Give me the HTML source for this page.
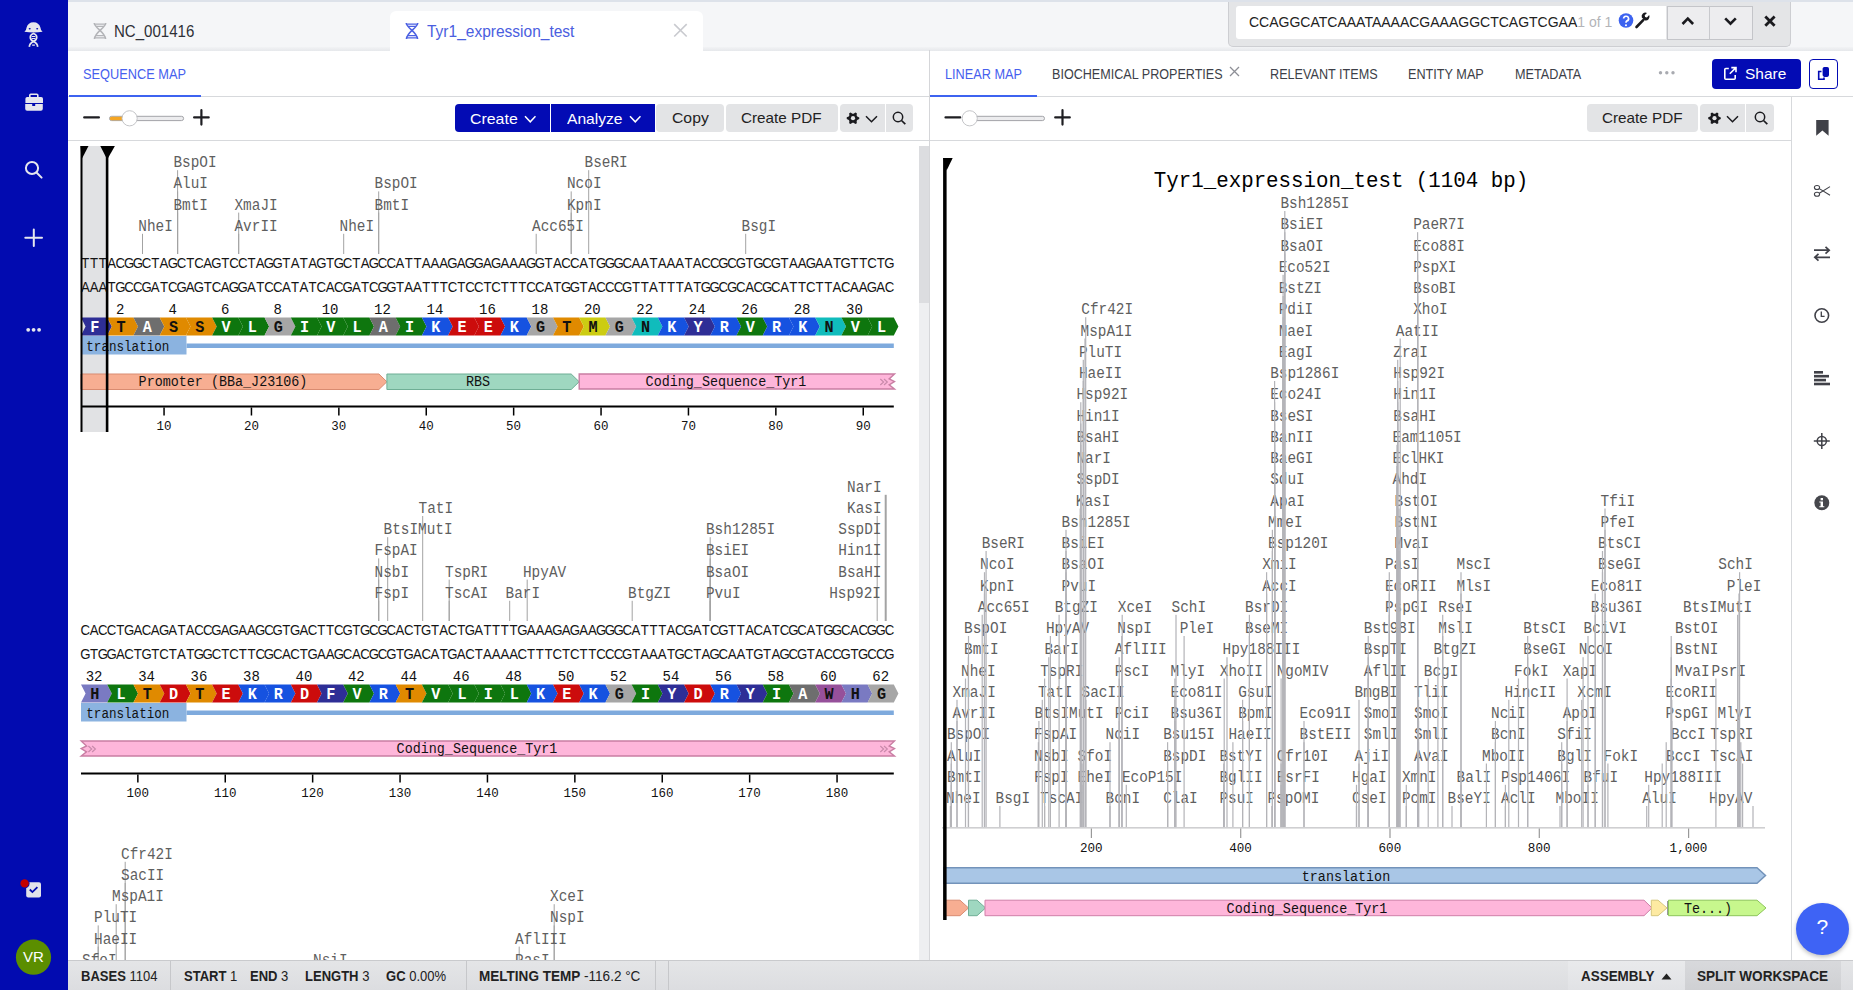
<!DOCTYPE html><html><head><meta charset="utf-8"><style>
*{margin:0;padding:0;box-sizing:border-box}
html,body{width:1853px;height:990px;overflow:hidden;background:#fff;font-family:"Liberation Sans", sans-serif}
.a{position:absolute}
.btn{position:absolute;border-radius:4px;font-size:16px;line-height:26px;text-align:center;white-space:nowrap}
.dk{background:#030bb4;color:#fff}
.lt{background:#e3e4e6;color:#222}
.tab{position:absolute;font-size:15px;color:#3d3f48;white-space:nowrap;top:65.4px}
.st{position:absolute;top:968px;font-size:14px;color:#222;white-space:nowrap}
.st b{font-weight:bold}
</style></head><body>
<svg class="a" style="left:0;top:0" width="1853" height="990"><style>
.lb{font-family:"Liberation Mono",monospace;font-size:14.4px;fill:#5f5f5f}
.sq{font-family:"Liberation Sans",sans-serif;font-size:13.2px;fill:#151515;text-anchor:middle}
.num{font-family:"Liberation Mono",monospace;font-size:14px;fill:#111;text-anchor:middle}
.aa{font-family:"Liberation Mono",monospace;font-size:15.2px;font-weight:bold;text-anchor:middle}
.ft{font-family:"Liberation Mono",monospace;font-size:13.4px;fill:#111}
.rl{font-family:"Liberation Mono",monospace;font-size:12.5px;fill:#111;text-anchor:middle}
.title{font-family:"Liberation Mono",monospace;font-size:20.8px;fill:#000}
</style><clipPath id="cl"><rect x="68" y="141" width="850" height="819"/></clipPath><g clip-path="url(#cl)"><rect x="81.5" y="146" width="25.5" height="286" fill="#e1e2e4"/><text x="138.3" y="0" transform="matrix(1,0,0,1.11,0,230.80)" class="lb">NheI</text><line x1="142.5" y1="233.8" x2="142.5" y2="254.0" stroke="#a3a3a3" stroke-width="1"/><text x="173.4" y="0" transform="matrix(1,0,0,1.11,0,167.20)" class="lb">BspOI</text><line x1="177.6" y1="170.2" x2="177.6" y2="254.0" stroke="#a3a3a3" stroke-width="1"/><text x="173.4" y="0" transform="matrix(1,0,0,1.11,0,188.40)" class="lb">AluI</text><line x1="177.6" y1="191.4" x2="177.6" y2="254.0" stroke="#a3a3a3" stroke-width="1"/><text x="173.4" y="0" transform="matrix(1,0,0,1.11,0,209.60)" class="lb">BmtI</text><line x1="177.6" y1="212.6" x2="177.6" y2="254.0" stroke="#a3a3a3" stroke-width="1"/><text x="234.5" y="0" transform="matrix(1,0,0,1.11,0,209.60)" class="lb">XmaJI</text><line x1="238.7" y1="212.6" x2="238.7" y2="254.0" stroke="#a3a3a3" stroke-width="1"/><text x="234.5" y="0" transform="matrix(1,0,0,1.11,0,230.80)" class="lb">AvrII</text><line x1="238.7" y1="233.8" x2="238.7" y2="254.0" stroke="#a3a3a3" stroke-width="1"/><text x="374.5" y="0" transform="matrix(1,0,0,1.11,0,188.40)" class="lb">BspOI</text><line x1="378.7" y1="191.4" x2="378.7" y2="254.0" stroke="#a3a3a3" stroke-width="1"/><text x="374.5" y="0" transform="matrix(1,0,0,1.11,0,209.60)" class="lb">BmtI</text><line x1="378.7" y1="212.6" x2="378.7" y2="254.0" stroke="#a3a3a3" stroke-width="1"/><text x="339.5" y="0" transform="matrix(1,0,0,1.11,0,230.80)" class="lb">NheI</text><line x1="343.7" y1="233.8" x2="343.7" y2="254.0" stroke="#a3a3a3" stroke-width="1"/><text x="584.5" y="0" transform="matrix(1,0,0,1.11,0,167.20)" class="lb">BseRI</text><line x1="588.7" y1="170.2" x2="588.7" y2="254.0" stroke="#a3a3a3" stroke-width="1"/><text x="567" y="0" transform="matrix(1,0,0,1.11,0,188.40)" class="lb">NcoI</text><line x1="571.2" y1="191.4" x2="571.2" y2="254.0" stroke="#a3a3a3" stroke-width="1"/><text x="567" y="0" transform="matrix(1,0,0,1.11,0,209.60)" class="lb">KpnI</text><line x1="571.2" y1="212.6" x2="571.2" y2="254.0" stroke="#a3a3a3" stroke-width="1"/><text x="532" y="0" transform="matrix(1,0,0,1.11,0,230.80)" class="lb">Acc65I</text><line x1="536.2" y1="233.8" x2="536.2" y2="254.0" stroke="#a3a3a3" stroke-width="1"/><text x="741.5" y="0" transform="matrix(1,0,0,1.11,0,230.80)" class="lb">BsgI</text><line x1="745.7" y1="233.8" x2="745.7" y2="254.0" stroke="#a3a3a3" stroke-width="1"/><text x="85.37 94.11 102.85 111.59 120.33 129.07 137.81 146.55 155.29 164.03 172.77 181.51 190.25 198.99 207.73 216.47 225.21 233.95 242.69 251.43 260.17 268.91 277.65 286.39 295.13 303.87 312.61 321.35 330.09 338.83 347.57 356.31 365.05 373.79 382.53 391.27 400.01 408.75 417.49 426.23 434.97 443.71 452.45 461.19 469.93 478.67 487.41 496.15 504.89 513.63 522.37 531.11 539.85 548.59 557.33 566.07 574.81 583.55 592.29 601.03 609.77 618.51 627.25 635.99 644.73 653.47 662.21 670.95 679.69 688.43 697.17 705.91 714.65 723.39 732.13 740.87 749.61 758.35 767.09 775.83 784.57 793.31 802.05 810.79 819.53 828.27 837.01 845.75 854.49 863.23 871.97 880.71 889.45" y="0" transform="matrix(1,0,0,1.04,0,268.00)" class="sq">TTTACGGCTAGCTCAGTCCTAGGTATAGTGCTAGCCATTAAAGAGGAGAAAGGTACCATGGGCAATAAATACCGCGTGCGTAAGAATGTTCTG</text><text x="85.37 94.11 102.85 111.59 120.33 129.07 137.81 146.55 155.29 164.03 172.77 181.51 190.25 198.99 207.73 216.47 225.21 233.95 242.69 251.43 260.17 268.91 277.65 286.39 295.13 303.87 312.61 321.35 330.09 338.83 347.57 356.31 365.05 373.79 382.53 391.27 400.01 408.75 417.49 426.23 434.97 443.71 452.45 461.19 469.93 478.67 487.41 496.15 504.89 513.63 522.37 531.11 539.85 548.59 557.33 566.07 574.81 583.55 592.29 601.03 609.77 618.51 627.25 635.99 644.73 653.47 662.21 670.95 679.69 688.43 697.17 705.91 714.65 723.39 732.13 740.87 749.61 758.35 767.09 775.83 784.57 793.31 802.05 810.79 819.53 828.27 837.01 845.75 854.49 863.23 871.97 880.71 889.45" y="0" transform="matrix(1,0,0,1.04,0,291.50)" class="sq">AAATGCCGATCGAGTCAGGATCCATATCACGATCGGTAATTTCTCCTCTTTCCATGGTACCCGTTATTTATGGCGCACGCATTCTTACAAGAC</text><text x="120.3" y="0" transform="matrix(1,0,0,1.07,0,314.00)" class="num">2</text><text x="172.8" y="0" transform="matrix(1,0,0,1.07,0,314.00)" class="num">4</text><text x="225.2" y="0" transform="matrix(1,0,0,1.07,0,314.00)" class="num">6</text><text x="277.6" y="0" transform="matrix(1,0,0,1.07,0,314.00)" class="num">8</text><text x="330.1" y="0" transform="matrix(1,0,0,1.07,0,314.00)" class="num">10</text><text x="382.5" y="0" transform="matrix(1,0,0,1.07,0,314.00)" class="num">12</text><text x="435.0" y="0" transform="matrix(1,0,0,1.07,0,314.00)" class="num">14</text><text x="487.4" y="0" transform="matrix(1,0,0,1.07,0,314.00)" class="num">16</text><text x="539.9" y="0" transform="matrix(1,0,0,1.07,0,314.00)" class="num">18</text><text x="592.3" y="0" transform="matrix(1,0,0,1.07,0,314.00)" class="num">20</text><text x="644.7" y="0" transform="matrix(1,0,0,1.07,0,314.00)" class="num">22</text><text x="697.2" y="0" transform="matrix(1,0,0,1.07,0,314.00)" class="num">24</text><text x="749.6" y="0" transform="matrix(1,0,0,1.07,0,314.00)" class="num">26</text><text x="802.1" y="0" transform="matrix(1,0,0,1.07,0,314.00)" class="num">28</text><text x="854.5" y="0" transform="matrix(1,0,0,1.07,0,314.00)" class="num">30</text><polygon points="81.0,317.5 107.2,317.5 111.8,326.5 107.2,335.5 81.0,335.5 85.6,326.5" fill="#2e2e96"/><text x="94.9" y="0" transform="matrix(1,0,0,1.12,0,331.70)" class="aa" fill="#fff">F</text><polygon points="107.2,317.5 133.4,317.5 138.0,326.5 133.4,335.5 107.2,335.5 111.8,326.5" fill="#e08a00"/><text x="121.1" y="0" transform="matrix(1,0,0,1.12,0,331.70)" class="aa" fill="#111">T</text><polygon points="133.4,317.5 159.7,317.5 164.3,326.5 159.7,335.5 133.4,335.5 138.0,326.5" fill="#6e6e6e"/><text x="147.4" y="0" transform="matrix(1,0,0,1.12,0,331.70)" class="aa" fill="#fff">A</text><polygon points="159.7,317.5 185.9,317.5 190.5,326.5 185.9,335.5 159.7,335.5 164.3,326.5" fill="#e08a00"/><text x="173.6" y="0" transform="matrix(1,0,0,1.12,0,331.70)" class="aa" fill="#111">S</text><polygon points="185.9,317.5 212.1,317.5 216.7,326.5 212.1,335.5 185.9,335.5 190.5,326.5" fill="#e08a00"/><text x="199.8" y="0" transform="matrix(1,0,0,1.12,0,331.70)" class="aa" fill="#111">S</text><polygon points="212.1,317.5 238.3,317.5 242.9,326.5 238.3,335.5 212.1,335.5 216.7,326.5" fill="#0e760e"/><text x="226.0" y="0" transform="matrix(1,0,0,1.12,0,331.70)" class="aa" fill="#fff">V</text><polygon points="238.3,317.5 264.5,317.5 269.1,326.5 264.5,335.5 238.3,335.5 242.9,326.5" fill="#0e760e"/><text x="252.2" y="0" transform="matrix(1,0,0,1.12,0,331.70)" class="aa" fill="#fff">L</text><polygon points="264.5,317.5 290.8,317.5 295.4,326.5 290.8,335.5 264.5,335.5 269.1,326.5" fill="#a6a6a6"/><text x="278.4" y="0" transform="matrix(1,0,0,1.12,0,331.70)" class="aa" fill="#111">G</text><polygon points="290.8,317.5 317.0,317.5 321.6,326.5 317.0,335.5 290.8,335.5 295.4,326.5" fill="#0e760e"/><text x="304.7" y="0" transform="matrix(1,0,0,1.12,0,331.70)" class="aa" fill="#fff">I</text><polygon points="317.0,317.5 343.2,317.5 347.8,326.5 343.2,335.5 317.0,335.5 321.6,326.5" fill="#0e760e"/><text x="330.9" y="0" transform="matrix(1,0,0,1.12,0,331.70)" class="aa" fill="#fff">V</text><polygon points="343.2,317.5 369.4,317.5 374.0,326.5 369.4,335.5 343.2,335.5 347.8,326.5" fill="#0e760e"/><text x="357.1" y="0" transform="matrix(1,0,0,1.12,0,331.70)" class="aa" fill="#fff">L</text><polygon points="369.4,317.5 395.6,317.5 400.2,326.5 395.6,335.5 369.4,335.5 374.0,326.5" fill="#6e6e6e"/><text x="383.3" y="0" transform="matrix(1,0,0,1.12,0,331.70)" class="aa" fill="#fff">A</text><polygon points="395.6,317.5 421.9,317.5 426.5,326.5 421.9,335.5 395.6,335.5 400.2,326.5" fill="#0e760e"/><text x="409.6" y="0" transform="matrix(1,0,0,1.12,0,331.70)" class="aa" fill="#fff">I</text><polygon points="421.9,317.5 448.1,317.5 452.7,326.5 448.1,335.5 421.9,335.5 426.5,326.5" fill="#1652e0"/><text x="435.8" y="0" transform="matrix(1,0,0,1.12,0,331.70)" class="aa" fill="#fff">K</text><polygon points="448.1,317.5 474.3,317.5 478.9,326.5 474.3,335.5 448.1,335.5 452.7,326.5" fill="#cc0c0c"/><text x="462.0" y="0" transform="matrix(1,0,0,1.12,0,331.70)" class="aa" fill="#fff">E</text><polygon points="474.3,317.5 500.5,317.5 505.1,326.5 500.5,335.5 474.3,335.5 478.9,326.5" fill="#cc0c0c"/><text x="488.2" y="0" transform="matrix(1,0,0,1.12,0,331.70)" class="aa" fill="#fff">E</text><polygon points="500.5,317.5 526.7,317.5 531.3,326.5 526.7,335.5 500.5,335.5 505.1,326.5" fill="#1652e0"/><text x="514.4" y="0" transform="matrix(1,0,0,1.12,0,331.70)" class="aa" fill="#fff">K</text><polygon points="526.7,317.5 553.0,317.5 557.6,326.5 553.0,335.5 526.7,335.5 531.3,326.5" fill="#a6a6a6"/><text x="540.6" y="0" transform="matrix(1,0,0,1.12,0,331.70)" class="aa" fill="#111">G</text><polygon points="553.0,317.5 579.2,317.5 583.8,326.5 579.2,335.5 553.0,335.5 557.6,326.5" fill="#e08a00"/><text x="566.9" y="0" transform="matrix(1,0,0,1.12,0,331.70)" class="aa" fill="#111">T</text><polygon points="579.2,317.5 605.4,317.5 610.0,326.5 605.4,335.5 579.2,335.5 583.8,326.5" fill="#cccc12"/><text x="593.1" y="0" transform="matrix(1,0,0,1.12,0,331.70)" class="aa" fill="#111">M</text><polygon points="605.4,317.5 631.6,317.5 636.2,326.5 631.6,335.5 605.4,335.5 610.0,326.5" fill="#a6a6a6"/><text x="619.3" y="0" transform="matrix(1,0,0,1.12,0,331.70)" class="aa" fill="#111">G</text><polygon points="631.6,317.5 657.8,317.5 662.4,326.5 657.8,335.5 631.6,335.5 636.2,326.5" fill="#10bcbc"/><text x="645.5" y="0" transform="matrix(1,0,0,1.12,0,331.70)" class="aa" fill="#111">N</text><polygon points="657.8,317.5 684.1,317.5 688.7,326.5 684.1,335.5 657.8,335.5 662.4,326.5" fill="#1652e0"/><text x="671.8" y="0" transform="matrix(1,0,0,1.12,0,331.70)" class="aa" fill="#fff">K</text><polygon points="684.1,317.5 710.3,317.5 714.9,326.5 710.3,335.5 684.1,335.5 688.7,326.5" fill="#2e2e96"/><text x="698.0" y="0" transform="matrix(1,0,0,1.12,0,331.70)" class="aa" fill="#fff">Y</text><polygon points="710.3,317.5 736.5,317.5 741.1,326.5 736.5,335.5 710.3,335.5 714.9,326.5" fill="#1652e0"/><text x="724.2" y="0" transform="matrix(1,0,0,1.12,0,331.70)" class="aa" fill="#fff">R</text><polygon points="736.5,317.5 762.7,317.5 767.3,326.5 762.7,335.5 736.5,335.5 741.1,326.5" fill="#0e760e"/><text x="750.4" y="0" transform="matrix(1,0,0,1.12,0,331.70)" class="aa" fill="#fff">V</text><polygon points="762.7,317.5 788.9,317.5 793.5,326.5 788.9,335.5 762.7,335.5 767.3,326.5" fill="#1652e0"/><text x="776.6" y="0" transform="matrix(1,0,0,1.12,0,331.70)" class="aa" fill="#fff">R</text><polygon points="788.9,317.5 815.2,317.5 819.8,326.5 815.2,335.5 788.9,335.5 793.5,326.5" fill="#1652e0"/><text x="802.9" y="0" transform="matrix(1,0,0,1.12,0,331.70)" class="aa" fill="#fff">K</text><polygon points="815.2,317.5 841.4,317.5 846.0,326.5 841.4,335.5 815.2,335.5 819.8,326.5" fill="#10bcbc"/><text x="829.1" y="0" transform="matrix(1,0,0,1.12,0,331.70)" class="aa" fill="#111">N</text><polygon points="841.4,317.5 867.6,317.5 872.2,326.5 867.6,335.5 841.4,335.5 846.0,326.5" fill="#0e760e"/><text x="855.3" y="0" transform="matrix(1,0,0,1.12,0,331.70)" class="aa" fill="#fff">V</text><polygon points="867.6,317.5 893.8,317.5 898.4,326.5 893.8,335.5 867.6,335.5 872.2,326.5" fill="#0e760e"/><text x="881.5" y="0" transform="matrix(1,0,0,1.12,0,331.70)" class="aa" fill="#fff">L</text><rect x="186.5" y="343.5" width="707.3" height="4.5" fill="#7eaadd"/><rect x="81.0" y="336.0" width="105.5" height="18.5" fill="#8bb3e0"/><text x="86.3" y="0" transform="matrix(1,0,0,1.1,0,351.00)" class="ft" style="font-size:12.6px">translation</text><polygon points="81.0,374.0 378.90000000000003,374.0 386.90000000000003,381.75 378.90000000000003,389.5 81.0,389.5" fill="#f7ae92" stroke="#d98b70" stroke-width="1"/><text x="223.0" y="0" transform="matrix(1,0,0,1.1,0,386.00)" class="ft" text-anchor="middle">Promoter (BBa_J23106)</text><polygon points="386.90000000000003,374.0 571.1800000000001,374.0 579.1800000000001,381.75 571.1800000000001,389.5 386.90000000000003,389.5" fill="#9fd7c0" stroke="#6fae95" stroke-width="1"/><text x="478.0" y="0" transform="matrix(1,0,0,1.1,0,386.00)" class="ft" text-anchor="middle">RBS</text><polygon points="579.2,374.0 894.5,374.0 889.2,378.9 894.5,381.5 889.2,384.8 894.5,389.0 579.2,389.0" fill="#feb6da" stroke="#c97ea3" stroke-width="1.4"/><path d="M880.3,379.0 l3.3,3 l-3.3,3 M884.0,379.0 l3.3,3 l-3.3,3" stroke="#c98aab" stroke-width="1.2" fill="none"/><text x="726.0" y="0" transform="matrix(1,0,0,1.1,0,385.80)" class="ft" text-anchor="middle">Coding_Sequence_Tyr1</text><rect x="81.0" y="405.5" width="812.8" height="2" fill="#000"/><rect x="163.3" y="407.5" width="1.5" height="8" fill="#000"/><text x="164.0" y="0" transform="matrix(1,0,0,1.08,0,429.50)" class="rl">10</text><rect x="250.7" y="407.5" width="1.5" height="8" fill="#000"/><text x="251.4" y="0" transform="matrix(1,0,0,1.08,0,429.50)" class="rl">20</text><rect x="338.1" y="407.5" width="1.5" height="8" fill="#000"/><text x="338.8" y="0" transform="matrix(1,0,0,1.08,0,429.50)" class="rl">30</text><rect x="425.5" y="407.5" width="1.5" height="8" fill="#000"/><text x="426.2" y="0" transform="matrix(1,0,0,1.08,0,429.50)" class="rl">40</text><rect x="512.9" y="407.5" width="1.5" height="8" fill="#000"/><text x="513.6" y="0" transform="matrix(1,0,0,1.08,0,429.50)" class="rl">50</text><rect x="600.3" y="407.5" width="1.5" height="8" fill="#000"/><text x="601.0" y="0" transform="matrix(1,0,0,1.08,0,429.50)" class="rl">60</text><rect x="687.7" y="407.5" width="1.5" height="8" fill="#000"/><text x="688.4" y="0" transform="matrix(1,0,0,1.08,0,429.50)" class="rl">70</text><rect x="775.1" y="407.5" width="1.5" height="8" fill="#000"/><text x="775.8" y="0" transform="matrix(1,0,0,1.08,0,429.50)" class="rl">80</text><rect x="862.5" y="407.5" width="1.5" height="8" fill="#000"/><text x="863.2" y="0" transform="matrix(1,0,0,1.08,0,429.50)" class="rl">90</text><rect x="80.5" y="146" width="2" height="286" fill="#000"/><rect x="105.8" y="146" width="2.6" height="286" fill="#000"/><polygon points="80.5,146 88.5,146 81.5,159.5" fill="#000"/><polygon points="100.3,146 114.9,146 107.2,159.6" fill="#000"/><text x="418.5" y="0" transform="matrix(1,0,0,1.11,0,513.00)" class="lb">TatI</text><line x1="422.7" y1="516.0" x2="422.7" y2="621.0" stroke="#a3a3a3" stroke-width="1"/><text x="383.5" y="0" transform="matrix(1,0,0,1.11,0,534.20)" class="lb">BtsIMutI</text><line x1="387.7" y1="537.2" x2="387.7" y2="621.0" stroke="#a3a3a3" stroke-width="1"/><text x="374.5" y="0" transform="matrix(1,0,0,1.11,0,555.40)" class="lb">FspAI</text><line x1="378.7" y1="558.4" x2="378.7" y2="621.0" stroke="#a3a3a3" stroke-width="1"/><text x="374.5" y="0" transform="matrix(1,0,0,1.11,0,576.60)" class="lb">NsbI</text><line x1="378.7" y1="579.6" x2="378.7" y2="621.0" stroke="#a3a3a3" stroke-width="1"/><text x="374.5" y="0" transform="matrix(1,0,0,1.11,0,597.80)" class="lb">FspI</text><line x1="378.7" y1="600.8" x2="378.7" y2="621.0" stroke="#a3a3a3" stroke-width="1"/><text x="445" y="0" transform="matrix(1,0,0,1.11,0,576.60)" class="lb">TspRI</text><line x1="449.2" y1="579.6" x2="449.2" y2="621.0" stroke="#a3a3a3" stroke-width="1"/><text x="445" y="0" transform="matrix(1,0,0,1.11,0,597.80)" class="lb">TscAI</text><line x1="449.2" y1="600.8" x2="449.2" y2="621.0" stroke="#a3a3a3" stroke-width="1"/><text x="523" y="0" transform="matrix(1,0,0,1.11,0,576.60)" class="lb">HpyAV</text><line x1="527.2" y1="579.6" x2="527.2" y2="621.0" stroke="#a3a3a3" stroke-width="1"/><text x="505.5" y="0" transform="matrix(1,0,0,1.11,0,597.80)" class="lb">BarI</text><line x1="509.7" y1="600.8" x2="509.7" y2="621.0" stroke="#a3a3a3" stroke-width="1"/><text x="628" y="0" transform="matrix(1,0,0,1.11,0,597.80)" class="lb">BtgZI</text><line x1="632.2" y1="600.8" x2="632.2" y2="621.0" stroke="#a3a3a3" stroke-width="1"/><text x="706" y="0" transform="matrix(1,0,0,1.11,0,534.20)" class="lb">Bsh1285I</text><line x1="710.2" y1="537.2" x2="710.2" y2="621.0" stroke="#a3a3a3" stroke-width="1"/><text x="706" y="0" transform="matrix(1,0,0,1.11,0,555.40)" class="lb">BsiEI</text><line x1="710.2" y1="558.4" x2="710.2" y2="621.0" stroke="#a3a3a3" stroke-width="1"/><text x="706" y="0" transform="matrix(1,0,0,1.11,0,576.60)" class="lb">BsaOI</text><line x1="710.2" y1="579.6" x2="710.2" y2="621.0" stroke="#a3a3a3" stroke-width="1"/><text x="706" y="0" transform="matrix(1,0,0,1.11,0,597.80)" class="lb">PvuI</text><line x1="710.2" y1="600.8" x2="710.2" y2="621.0" stroke="#a3a3a3" stroke-width="1"/><text x="847" y="0" transform="matrix(1,0,0,1.11,0,491.80)" class="lb">NarI</text><line x1="885.7" y1="494.8" x2="885.7" y2="621.0" stroke="#a3a3a3" stroke-width="2"/><text x="847" y="0" transform="matrix(1,0,0,1.11,0,513.00)" class="lb">KasI</text><line x1="877.2" y1="516.0" x2="877.2" y2="621.0" stroke="#a3a3a3" stroke-width="1"/><text x="838.3" y="0" transform="matrix(1,0,0,1.11,0,534.20)" class="lb">SspDI</text><text x="838.3" y="0" transform="matrix(1,0,0,1.11,0,555.40)" class="lb">Hin1I</text><text x="838.3" y="0" transform="matrix(1,0,0,1.11,0,576.60)" class="lb">BsaHI</text><text x="829.2" y="0" transform="matrix(1,0,0,1.11,0,597.80)" class="lb">Hsp92I</text><text x="85.37 94.11 102.85 111.59 120.33 129.07 137.81 146.55 155.29 164.03 172.77 181.51 190.25 198.99 207.73 216.47 225.21 233.95 242.69 251.43 260.17 268.91 277.65 286.39 295.13 303.87 312.61 321.35 330.09 338.83 347.57 356.31 365.05 373.79 382.53 391.27 400.01 408.75 417.49 426.23 434.97 443.71 452.45 461.19 469.93 478.67 487.41 496.15 504.89 513.63 522.37 531.11 539.85 548.59 557.33 566.07 574.81 583.55 592.29 601.03 609.77 618.51 627.25 635.99 644.73 653.47 662.21 670.95 679.69 688.43 697.17 705.91 714.65 723.39 732.13 740.87 749.61 758.35 767.09 775.83 784.57 793.31 802.05 810.79 819.53 828.27 837.01 845.75 854.49 863.23 871.97 880.71 889.45" y="0" transform="matrix(1,0,0,1.04,0,635.00)" class="sq">CACCTGACAGATACCGAGAAGCGTGACTTCGTGCGCACTGTACTGATTTTGAAAGAGAAGGGCATTTACGATCGTTACATCGCATGGCACGGC</text><text x="85.37 94.11 102.85 111.59 120.33 129.07 137.81 146.55 155.29 164.03 172.77 181.51 190.25 198.99 207.73 216.47 225.21 233.95 242.69 251.43 260.17 268.91 277.65 286.39 295.13 303.87 312.61 321.35 330.09 338.83 347.57 356.31 365.05 373.79 382.53 391.27 400.01 408.75 417.49 426.23 434.97 443.71 452.45 461.19 469.93 478.67 487.41 496.15 504.89 513.63 522.37 531.11 539.85 548.59 557.33 566.07 574.81 583.55 592.29 601.03 609.77 618.51 627.25 635.99 644.73 653.47 662.21 670.95 679.69 688.43 697.17 705.91 714.65 723.39 732.13 740.87 749.61 758.35 767.09 775.83 784.57 793.31 802.05 810.79 819.53 828.27 837.01 845.75 854.49 863.23 871.97 880.71 889.45" y="0" transform="matrix(1,0,0,1.04,0,658.50)" class="sq">GTGGACTGTCTATGGCTCTTCGCACTGAAGCACGCGTGACATGACTAAAACTTTCTCTTCCCGTAAATGCTAGCAATGTAGCGTACCGTGCCG</text><text x="94.1" y="0" transform="matrix(1,0,0,1.07,0,681.00)" class="num">32</text><text x="146.6" y="0" transform="matrix(1,0,0,1.07,0,681.00)" class="num">34</text><text x="199.0" y="0" transform="matrix(1,0,0,1.07,0,681.00)" class="num">36</text><text x="251.4" y="0" transform="matrix(1,0,0,1.07,0,681.00)" class="num">38</text><text x="303.9" y="0" transform="matrix(1,0,0,1.07,0,681.00)" class="num">40</text><text x="356.3" y="0" transform="matrix(1,0,0,1.07,0,681.00)" class="num">42</text><text x="408.8" y="0" transform="matrix(1,0,0,1.07,0,681.00)" class="num">44</text><text x="461.2" y="0" transform="matrix(1,0,0,1.07,0,681.00)" class="num">46</text><text x="513.6" y="0" transform="matrix(1,0,0,1.07,0,681.00)" class="num">48</text><text x="566.1" y="0" transform="matrix(1,0,0,1.07,0,681.00)" class="num">50</text><text x="618.5" y="0" transform="matrix(1,0,0,1.07,0,681.00)" class="num">52</text><text x="671.0" y="0" transform="matrix(1,0,0,1.07,0,681.00)" class="num">54</text><text x="723.4" y="0" transform="matrix(1,0,0,1.07,0,681.00)" class="num">56</text><text x="775.8" y="0" transform="matrix(1,0,0,1.07,0,681.00)" class="num">58</text><text x="828.3" y="0" transform="matrix(1,0,0,1.07,0,681.00)" class="num">60</text><text x="880.7" y="0" transform="matrix(1,0,0,1.07,0,681.00)" class="num">62</text><polygon points="81.0,684.5 107.2,684.5 111.8,693.5 107.2,702.5 81.0,702.5 85.6,693.5" fill="#7a7ac2"/><text x="94.9" y="0" transform="matrix(1,0,0,1.12,0,698.70)" class="aa" fill="#111">H</text><polygon points="107.2,684.5 133.4,684.5 138.0,693.5 133.4,702.5 107.2,702.5 111.8,693.5" fill="#0e760e"/><text x="121.1" y="0" transform="matrix(1,0,0,1.12,0,698.70)" class="aa" fill="#fff">L</text><polygon points="133.4,684.5 159.7,684.5 164.3,693.5 159.7,702.5 133.4,702.5 138.0,693.5" fill="#e08a00"/><text x="147.4" y="0" transform="matrix(1,0,0,1.12,0,698.70)" class="aa" fill="#111">T</text><polygon points="159.7,684.5 185.9,684.5 190.5,693.5 185.9,702.5 159.7,702.5 164.3,693.5" fill="#cc0c0c"/><text x="173.6" y="0" transform="matrix(1,0,0,1.12,0,698.70)" class="aa" fill="#fff">D</text><polygon points="185.9,684.5 212.1,684.5 216.7,693.5 212.1,702.5 185.9,702.5 190.5,693.5" fill="#e08a00"/><text x="199.8" y="0" transform="matrix(1,0,0,1.12,0,698.70)" class="aa" fill="#111">T</text><polygon points="212.1,684.5 238.3,684.5 242.9,693.5 238.3,702.5 212.1,702.5 216.7,693.5" fill="#cc0c0c"/><text x="226.0" y="0" transform="matrix(1,0,0,1.12,0,698.70)" class="aa" fill="#fff">E</text><polygon points="238.3,684.5 264.5,684.5 269.1,693.5 264.5,702.5 238.3,702.5 242.9,693.5" fill="#1652e0"/><text x="252.2" y="0" transform="matrix(1,0,0,1.12,0,698.70)" class="aa" fill="#fff">K</text><polygon points="264.5,684.5 290.8,684.5 295.4,693.5 290.8,702.5 264.5,702.5 269.1,693.5" fill="#1652e0"/><text x="278.4" y="0" transform="matrix(1,0,0,1.12,0,698.70)" class="aa" fill="#fff">R</text><polygon points="290.8,684.5 317.0,684.5 321.6,693.5 317.0,702.5 290.8,702.5 295.4,693.5" fill="#cc0c0c"/><text x="304.7" y="0" transform="matrix(1,0,0,1.12,0,698.70)" class="aa" fill="#fff">D</text><polygon points="317.0,684.5 343.2,684.5 347.8,693.5 343.2,702.5 317.0,702.5 321.6,693.5" fill="#2e2e96"/><text x="330.9" y="0" transform="matrix(1,0,0,1.12,0,698.70)" class="aa" fill="#fff">F</text><polygon points="343.2,684.5 369.4,684.5 374.0,693.5 369.4,702.5 343.2,702.5 347.8,693.5" fill="#0e760e"/><text x="357.1" y="0" transform="matrix(1,0,0,1.12,0,698.70)" class="aa" fill="#fff">V</text><polygon points="369.4,684.5 395.6,684.5 400.2,693.5 395.6,702.5 369.4,702.5 374.0,693.5" fill="#1652e0"/><text x="383.3" y="0" transform="matrix(1,0,0,1.12,0,698.70)" class="aa" fill="#fff">R</text><polygon points="395.6,684.5 421.9,684.5 426.5,693.5 421.9,702.5 395.6,702.5 400.2,693.5" fill="#e08a00"/><text x="409.6" y="0" transform="matrix(1,0,0,1.12,0,698.70)" class="aa" fill="#111">T</text><polygon points="421.9,684.5 448.1,684.5 452.7,693.5 448.1,702.5 421.9,702.5 426.5,693.5" fill="#0e760e"/><text x="435.8" y="0" transform="matrix(1,0,0,1.12,0,698.70)" class="aa" fill="#fff">V</text><polygon points="448.1,684.5 474.3,684.5 478.9,693.5 474.3,702.5 448.1,702.5 452.7,693.5" fill="#0e760e"/><text x="462.0" y="0" transform="matrix(1,0,0,1.12,0,698.70)" class="aa" fill="#fff">L</text><polygon points="474.3,684.5 500.5,684.5 505.1,693.5 500.5,702.5 474.3,702.5 478.9,693.5" fill="#0e760e"/><text x="488.2" y="0" transform="matrix(1,0,0,1.12,0,698.70)" class="aa" fill="#fff">I</text><polygon points="500.5,684.5 526.7,684.5 531.3,693.5 526.7,702.5 500.5,702.5 505.1,693.5" fill="#0e760e"/><text x="514.4" y="0" transform="matrix(1,0,0,1.12,0,698.70)" class="aa" fill="#fff">L</text><polygon points="526.7,684.5 553.0,684.5 557.6,693.5 553.0,702.5 526.7,702.5 531.3,693.5" fill="#1652e0"/><text x="540.6" y="0" transform="matrix(1,0,0,1.12,0,698.70)" class="aa" fill="#fff">K</text><polygon points="553.0,684.5 579.2,684.5 583.8,693.5 579.2,702.5 553.0,702.5 557.6,693.5" fill="#cc0c0c"/><text x="566.9" y="0" transform="matrix(1,0,0,1.12,0,698.70)" class="aa" fill="#fff">E</text><polygon points="579.2,684.5 605.4,684.5 610.0,693.5 605.4,702.5 579.2,702.5 583.8,693.5" fill="#1652e0"/><text x="593.1" y="0" transform="matrix(1,0,0,1.12,0,698.70)" class="aa" fill="#fff">K</text><polygon points="605.4,684.5 631.6,684.5 636.2,693.5 631.6,702.5 605.4,702.5 610.0,693.5" fill="#a6a6a6"/><text x="619.3" y="0" transform="matrix(1,0,0,1.12,0,698.70)" class="aa" fill="#111">G</text><polygon points="631.6,684.5 657.8,684.5 662.4,693.5 657.8,702.5 631.6,702.5 636.2,693.5" fill="#0e760e"/><text x="645.5" y="0" transform="matrix(1,0,0,1.12,0,698.70)" class="aa" fill="#fff">I</text><polygon points="657.8,684.5 684.1,684.5 688.7,693.5 684.1,702.5 657.8,702.5 662.4,693.5" fill="#2e2e96"/><text x="671.8" y="0" transform="matrix(1,0,0,1.12,0,698.70)" class="aa" fill="#fff">Y</text><polygon points="684.1,684.5 710.3,684.5 714.9,693.5 710.3,702.5 684.1,702.5 688.7,693.5" fill="#cc0c0c"/><text x="698.0" y="0" transform="matrix(1,0,0,1.12,0,698.70)" class="aa" fill="#fff">D</text><polygon points="710.3,684.5 736.5,684.5 741.1,693.5 736.5,702.5 710.3,702.5 714.9,693.5" fill="#1652e0"/><text x="724.2" y="0" transform="matrix(1,0,0,1.12,0,698.70)" class="aa" fill="#fff">R</text><polygon points="736.5,684.5 762.7,684.5 767.3,693.5 762.7,702.5 736.5,702.5 741.1,693.5" fill="#2e2e96"/><text x="750.4" y="0" transform="matrix(1,0,0,1.12,0,698.70)" class="aa" fill="#fff">Y</text><polygon points="762.7,684.5 788.9,684.5 793.5,693.5 788.9,702.5 762.7,702.5 767.3,693.5" fill="#0e760e"/><text x="776.6" y="0" transform="matrix(1,0,0,1.12,0,698.70)" class="aa" fill="#fff">I</text><polygon points="788.9,684.5 815.2,684.5 819.8,693.5 815.2,702.5 788.9,702.5 793.5,693.5" fill="#6e6e6e"/><text x="802.9" y="0" transform="matrix(1,0,0,1.12,0,698.70)" class="aa" fill="#fff">A</text><polygon points="815.2,684.5 841.4,684.5 846.0,693.5 841.4,702.5 815.2,702.5 819.8,693.5" fill="#96509a"/><text x="829.1" y="0" transform="matrix(1,0,0,1.12,0,698.70)" class="aa" fill="#111">W</text><polygon points="841.4,684.5 867.6,684.5 872.2,693.5 867.6,702.5 841.4,702.5 846.0,693.5" fill="#7a7ac2"/><text x="855.3" y="0" transform="matrix(1,0,0,1.12,0,698.70)" class="aa" fill="#111">H</text><polygon points="867.6,684.5 893.8,684.5 898.4,693.5 893.8,702.5 867.6,702.5 872.2,693.5" fill="#a6a6a6"/><text x="881.5" y="0" transform="matrix(1,0,0,1.12,0,698.70)" class="aa" fill="#111">G</text><rect x="186.5" y="710.5" width="707.3" height="4.5" fill="#7eaadd"/><rect x="81.0" y="703.0" width="105.5" height="18.5" fill="#8bb3e0"/><text x="86.3" y="0" transform="matrix(1,0,0,1.1,0,718.00)" class="ft" style="font-size:12.6px">translation</text><polygon points="81.2,741.0 894.5,741.0 889.2,746.0 894.5,748.5 889.2,751.8 894.5,756.0 81.2,756.0 86.5,751.8 81.2,748.5 86.5,746.0" fill="#feb6da" stroke="#c97ea3" stroke-width="1.4"/><path d="M880.3,746.0 l3.3,3 l-3.3,3 M884.0,746.0 l3.3,3 l-3.3,3" stroke="#c98aab" stroke-width="1.2" fill="none"/><path d="M88.4,746.0 l3.3,3 l-3.3,3 M92.10000000000001,746.0 l3.3,3 l-3.3,3" stroke="#c98aab" stroke-width="1.2" fill="none"/><text x="477.0" y="0" transform="matrix(1,0,0,1.1,0,752.80)" class="ft" text-anchor="middle">Coding_Sequence_Tyr1</text><rect x="81.0" y="772.5" width="812.8" height="2" fill="#000"/><rect x="137.1" y="774.5" width="1.5" height="8" fill="#000"/><text x="137.8" y="0" transform="matrix(1,0,0,1.08,0,796.50)" class="rl">100</text><rect x="224.5" y="774.5" width="1.5" height="8" fill="#000"/><text x="225.2" y="0" transform="matrix(1,0,0,1.08,0,796.50)" class="rl">110</text><rect x="311.9" y="774.5" width="1.5" height="8" fill="#000"/><text x="312.6" y="0" transform="matrix(1,0,0,1.08,0,796.50)" class="rl">120</text><rect x="399.3" y="774.5" width="1.5" height="8" fill="#000"/><text x="400.0" y="0" transform="matrix(1,0,0,1.08,0,796.50)" class="rl">130</text><rect x="486.7" y="774.5" width="1.5" height="8" fill="#000"/><text x="487.4" y="0" transform="matrix(1,0,0,1.08,0,796.50)" class="rl">140</text><rect x="574.1" y="774.5" width="1.5" height="8" fill="#000"/><text x="574.8" y="0" transform="matrix(1,0,0,1.08,0,796.50)" class="rl">150</text><rect x="661.5" y="774.5" width="1.5" height="8" fill="#000"/><text x="662.2" y="0" transform="matrix(1,0,0,1.08,0,796.50)" class="rl">160</text><rect x="748.9" y="774.5" width="1.5" height="8" fill="#000"/><text x="749.6" y="0" transform="matrix(1,0,0,1.08,0,796.50)" class="rl">170</text><rect x="836.3" y="774.5" width="1.5" height="8" fill="#000"/><text x="837.0" y="0" transform="matrix(1,0,0,1.08,0,796.50)" class="rl">180</text><text x="121" y="0" transform="matrix(1,0,0,1.11,0,858.80)" class="lb">Cfr42I</text><line x1="125.2" y1="861.8" x2="125.2" y2="990" stroke="#a3a3a3" stroke-width="1"/><text x="121" y="0" transform="matrix(1,0,0,1.11,0,880.00)" class="lb">SacII</text><line x1="125.2" y1="883.0" x2="125.2" y2="990" stroke="#a3a3a3" stroke-width="1"/><text x="112" y="0" transform="matrix(1,0,0,1.11,0,901.20)" class="lb">MspA1I</text><line x1="116.2" y1="904.2" x2="116.2" y2="990" stroke="#a3a3a3" stroke-width="1"/><text x="94" y="0" transform="matrix(1,0,0,1.11,0,922.40)" class="lb">PluTI</text><line x1="98.2" y1="925.4" x2="98.2" y2="990" stroke="#a3a3a3" stroke-width="1"/><text x="94" y="0" transform="matrix(1,0,0,1.11,0,943.60)" class="lb">HaeII</text><line x1="98.2" y1="946.6" x2="98.2" y2="990" stroke="#a3a3a3" stroke-width="1"/><text x="82" y="0" transform="matrix(1,0,0,1.11,0,964.80)" class="lb">SfoI</text><line x1="86.2" y1="967.8" x2="86.2" y2="990" stroke="#a3a3a3" stroke-width="1"/><text x="313" y="0" transform="matrix(1,0,0,1.11,0,964.80)" class="lb">NsiI</text><line x1="317.2" y1="967.8" x2="317.2" y2="990" stroke="#a3a3a3" stroke-width="1"/><text x="550" y="0" transform="matrix(1,0,0,1.11,0,901.20)" class="lb">XceI</text><line x1="554.2" y1="904.2" x2="554.2" y2="990" stroke="#a3a3a3" stroke-width="1"/><text x="550" y="0" transform="matrix(1,0,0,1.11,0,922.40)" class="lb">NspI</text><line x1="554.2" y1="925.4" x2="554.2" y2="990" stroke="#a3a3a3" stroke-width="1"/><text x="515" y="0" transform="matrix(1,0,0,1.11,0,943.60)" class="lb">AflIII</text><line x1="519.2" y1="946.6" x2="519.2" y2="990" stroke="#a3a3a3" stroke-width="1"/><text x="515" y="0" transform="matrix(1,0,0,1.11,0,964.80)" class="lb">PasI</text><line x1="519.2" y1="967.8" x2="519.2" y2="990" stroke="#a3a3a3" stroke-width="1"/></g><clipPath id="cr"><rect x="930" y="141" width="862" height="819"/></clipPath><g clip-path="url(#cr)"><text x="1341" y="0" transform="matrix(1,0,0,1.1,0,187.00)" class="title" text-anchor="middle">Tyr1_expression_test (1104 bp)</text><text x="1280.4" y="0" transform="matrix(1,0,0,1.11,0,208.00)" class="lb">Bsh1285I</text><text x="1280.4" y="0" transform="matrix(1,0,0,1.11,0,229.25)" class="lb">BsiEI</text><text x="1413.2" y="0" transform="matrix(1,0,0,1.11,0,229.25)" class="lb">PaeR7I</text><text x="1280.4" y="0" transform="matrix(1,0,0,1.11,0,250.50)" class="lb">BsaOI</text><text x="1413.2" y="0" transform="matrix(1,0,0,1.11,0,250.50)" class="lb">Eco88I</text><text x="1278.7" y="0" transform="matrix(1,0,0,1.11,0,271.75)" class="lb">Eco52I</text><text x="1413.2" y="0" transform="matrix(1,0,0,1.11,0,271.75)" class="lb">PspXI</text><text x="1278.7" y="0" transform="matrix(1,0,0,1.11,0,293.00)" class="lb">BstZI</text><text x="1413.2" y="0" transform="matrix(1,0,0,1.11,0,293.00)" class="lb">BsoBI</text><text x="1081.3" y="0" transform="matrix(1,0,0,1.11,0,314.25)" class="lb">Cfr42I</text><text x="1278.7" y="0" transform="matrix(1,0,0,1.11,0,314.25)" class="lb">PdiI</text><text x="1413.2" y="0" transform="matrix(1,0,0,1.11,0,314.25)" class="lb">XhoI</text><text x="1080.6" y="0" transform="matrix(1,0,0,1.11,0,335.50)" class="lb">MspA1I</text><text x="1278.7" y="0" transform="matrix(1,0,0,1.11,0,335.50)" class="lb">NaeI</text><text x="1395.8" y="0" transform="matrix(1,0,0,1.11,0,335.50)" class="lb">AatII</text><text x="1078.9" y="0" transform="matrix(1,0,0,1.11,0,356.75)" class="lb">PluTI</text><text x="1278.7" y="0" transform="matrix(1,0,0,1.11,0,356.75)" class="lb">EagI</text><text x="1393.3" y="0" transform="matrix(1,0,0,1.11,0,356.75)" class="lb">ZraI</text><text x="1078.9" y="0" transform="matrix(1,0,0,1.11,0,378.00)" class="lb">HaeII</text><text x="1270.2" y="0" transform="matrix(1,0,0,1.11,0,378.00)" class="lb">Bsp1286I</text><text x="1393.3" y="0" transform="matrix(1,0,0,1.11,0,378.00)" class="lb">Hsp92I</text><text x="1076.4" y="0" transform="matrix(1,0,0,1.11,0,399.25)" class="lb">Hsp92I</text><text x="1270.2" y="0" transform="matrix(1,0,0,1.11,0,399.25)" class="lb">Eco24I</text><text x="1393.3" y="0" transform="matrix(1,0,0,1.11,0,399.25)" class="lb">Hin1I</text><text x="1076.4" y="0" transform="matrix(1,0,0,1.11,0,420.50)" class="lb">Hin1I</text><text x="1270.2" y="0" transform="matrix(1,0,0,1.11,0,420.50)" class="lb">BseSI</text><text x="1393.3" y="0" transform="matrix(1,0,0,1.11,0,420.50)" class="lb">BsaHI</text><text x="1076.4" y="0" transform="matrix(1,0,0,1.11,0,441.75)" class="lb">BsaHI</text><text x="1270.2" y="0" transform="matrix(1,0,0,1.11,0,441.75)" class="lb">BanII</text><text x="1392.6" y="0" transform="matrix(1,0,0,1.11,0,441.75)" class="lb">Eam1105I</text><text x="1076.4" y="0" transform="matrix(1,0,0,1.11,0,463.00)" class="lb">NarI</text><text x="1270.2" y="0" transform="matrix(1,0,0,1.11,0,463.00)" class="lb">BaeGI</text><text x="1392.6" y="0" transform="matrix(1,0,0,1.11,0,463.00)" class="lb">EclHKI</text><text x="1076.4" y="0" transform="matrix(1,0,0,1.11,0,484.25)" class="lb">SspDI</text><text x="1270.2" y="0" transform="matrix(1,0,0,1.11,0,484.25)" class="lb">SduI</text><text x="1392.6" y="0" transform="matrix(1,0,0,1.11,0,484.25)" class="lb">AhdI</text><text x="1075.8" y="0" transform="matrix(1,0,0,1.11,0,505.50)" class="lb">KasI</text><text x="1270.3" y="0" transform="matrix(1,0,0,1.11,0,505.50)" class="lb">ApaI</text><text x="1394.6" y="0" transform="matrix(1,0,0,1.11,0,505.50)" class="lb">BstOI</text><text x="1600.6" y="0" transform="matrix(1,0,0,1.11,0,505.50)" class="lb">TfiI</text><text x="1061.6" y="0" transform="matrix(1,0,0,1.11,0,526.75)" class="lb">Bsh1285I</text><text x="1268" y="0" transform="matrix(1,0,0,1.11,0,526.75)" class="lb">MmeI</text><text x="1394.6" y="0" transform="matrix(1,0,0,1.11,0,526.75)" class="lb">BstNI</text><text x="1600.6" y="0" transform="matrix(1,0,0,1.11,0,526.75)" class="lb">PfeI</text><text x="981.7" y="0" transform="matrix(1,0,0,1.11,0,548.00)" class="lb">BseRI</text><text x="1061.6" y="0" transform="matrix(1,0,0,1.11,0,548.00)" class="lb">BsiEI</text><text x="1268" y="0" transform="matrix(1,0,0,1.11,0,548.00)" class="lb">Bsp120I</text><text x="1394.6" y="0" transform="matrix(1,0,0,1.11,0,548.00)" class="lb">MvaI</text><text x="1598.1" y="0" transform="matrix(1,0,0,1.11,0,548.00)" class="lb">BtsCI</text><text x="980.1" y="0" transform="matrix(1,0,0,1.11,0,569.25)" class="lb">NcoI</text><text x="1061.6" y="0" transform="matrix(1,0,0,1.11,0,569.25)" class="lb">BsaOI</text><text x="1262.2" y="0" transform="matrix(1,0,0,1.11,0,569.25)" class="lb">XmiI</text><text x="1384.9" y="0" transform="matrix(1,0,0,1.11,0,569.25)" class="lb">PasI</text><text x="1456.6" y="0" transform="matrix(1,0,0,1.11,0,569.25)" class="lb">MscI</text><text x="1598.1" y="0" transform="matrix(1,0,0,1.11,0,569.25)" class="lb">BseGI</text><text x="1718.3" y="0" transform="matrix(1,0,0,1.11,0,569.25)" class="lb">SchI</text><text x="980.1" y="0" transform="matrix(1,0,0,1.11,0,590.50)" class="lb">KpnI</text><text x="1061.6" y="0" transform="matrix(1,0,0,1.11,0,590.50)" class="lb">PvuI</text><text x="1262.2" y="0" transform="matrix(1,0,0,1.11,0,590.50)" class="lb">AccI</text><text x="1384.9" y="0" transform="matrix(1,0,0,1.11,0,590.50)" class="lb">EcoRII</text><text x="1456.6" y="0" transform="matrix(1,0,0,1.11,0,590.50)" class="lb">MlsI</text><text x="1590.8" y="0" transform="matrix(1,0,0,1.11,0,590.50)" class="lb">Eco81I</text><text x="1726.8" y="0" transform="matrix(1,0,0,1.11,0,590.50)" class="lb">PleI</text><text x="977.8" y="0" transform="matrix(1,0,0,1.11,0,611.75)" class="lb">Acc65I</text><text x="1054.7" y="0" transform="matrix(1,0,0,1.11,0,611.75)" class="lb">BtgZI</text><text x="1117.8" y="0" transform="matrix(1,0,0,1.11,0,611.75)" class="lb">XceI</text><text x="1171.6" y="0" transform="matrix(1,0,0,1.11,0,611.75)" class="lb">SchI</text><text x="1245" y="0" transform="matrix(1,0,0,1.11,0,611.75)" class="lb">BsrDI</text><text x="1384.9" y="0" transform="matrix(1,0,0,1.11,0,611.75)" class="lb">PspGI</text><text x="1438.3" y="0" transform="matrix(1,0,0,1.11,0,611.75)" class="lb">RseI</text><text x="1590.8" y="0" transform="matrix(1,0,0,1.11,0,611.75)" class="lb">Bsu36I</text><text x="1683.1" y="0" transform="matrix(1,0,0,1.11,0,611.75)" class="lb">BtsIMutI</text><text x="964.1" y="0" transform="matrix(1,0,0,1.11,0,633.00)" class="lb">BspOI</text><text x="1046" y="0" transform="matrix(1,0,0,1.11,0,633.00)" class="lb">HpyAV</text><text x="1117.3" y="0" transform="matrix(1,0,0,1.11,0,633.00)" class="lb">NspI</text><text x="1179.7" y="0" transform="matrix(1,0,0,1.11,0,633.00)" class="lb">PleI</text><text x="1245" y="0" transform="matrix(1,0,0,1.11,0,633.00)" class="lb">BseMI</text><text x="1363.8" y="0" transform="matrix(1,0,0,1.11,0,633.00)" class="lb">Bst98I</text><text x="1438.3" y="0" transform="matrix(1,0,0,1.11,0,633.00)" class="lb">MslI</text><text x="1523.3" y="0" transform="matrix(1,0,0,1.11,0,633.00)" class="lb">BtsCI</text><text x="1583.6" y="0" transform="matrix(1,0,0,1.11,0,633.00)" class="lb">BciVI</text><text x="1675.1" y="0" transform="matrix(1,0,0,1.11,0,633.00)" class="lb">BstOI</text><text x="964" y="0" transform="matrix(1,0,0,1.11,0,654.25)" class="lb">BmtI</text><text x="1044.4" y="0" transform="matrix(1,0,0,1.11,0,654.25)" class="lb">BarI</text><text x="1114.8" y="0" transform="matrix(1,0,0,1.11,0,654.25)" class="lb">AflIII</text><text x="1222.6" y="0" transform="matrix(1,0,0,1.11,0,654.25)" class="lb">Hpy188III</text><text x="1363.8" y="0" transform="matrix(1,0,0,1.11,0,654.25)" class="lb">BspTI</text><text x="1433.5" y="0" transform="matrix(1,0,0,1.11,0,654.25)" class="lb">BtgZI</text><text x="1523.3" y="0" transform="matrix(1,0,0,1.11,0,654.25)" class="lb">BseGI</text><text x="1578.7" y="0" transform="matrix(1,0,0,1.11,0,654.25)" class="lb">NcoI</text><text x="1675.1" y="0" transform="matrix(1,0,0,1.11,0,654.25)" class="lb">BstNI</text><text x="961.1" y="0" transform="matrix(1,0,0,1.11,0,675.50)" class="lb">NheI</text><text x="1040.2" y="0" transform="matrix(1,0,0,1.11,0,675.50)" class="lb">TspRI</text><text x="1114.8" y="0" transform="matrix(1,0,0,1.11,0,675.50)" class="lb">PscI</text><text x="1170.5" y="0" transform="matrix(1,0,0,1.11,0,675.50)" class="lb">MlyI</text><text x="1219.8" y="0" transform="matrix(1,0,0,1.11,0,675.50)" class="lb">XhoII</text><text x="1276.7" y="0" transform="matrix(1,0,0,1.11,0,675.50)" class="lb">NgoMIV</text><text x="1363.8" y="0" transform="matrix(1,0,0,1.11,0,675.50)" class="lb">AflII</text><text x="1423.8" y="0" transform="matrix(1,0,0,1.11,0,675.50)" class="lb">BcgI</text><text x="1514.1" y="0" transform="matrix(1,0,0,1.11,0,675.50)" class="lb">FokI</text><text x="1562.7" y="0" transform="matrix(1,0,0,1.11,0,675.50)" class="lb">XapI</text><text x="1675.1" y="0" transform="matrix(1,0,0,1.11,0,675.50)" class="lb">MvaI</text><text x="1711.5" y="0" transform="matrix(1,0,0,1.11,0,675.50)" class="lb">PsrI</text><text x="952.6" y="0" transform="matrix(1,0,0,1.11,0,696.75)" class="lb">XmaJI</text><text x="1037.9" y="0" transform="matrix(1,0,0,1.11,0,696.75)" class="lb">TatI</text><text x="1081.5" y="0" transform="matrix(1,0,0,1.11,0,696.75)" class="lb">SacII</text><text x="1170.5" y="0" transform="matrix(1,0,0,1.11,0,696.75)" class="lb">Eco81I</text><text x="1238.2" y="0" transform="matrix(1,0,0,1.11,0,696.75)" class="lb">GsuI</text><text x="1354.6" y="0" transform="matrix(1,0,0,1.11,0,696.75)" class="lb">BmgBI</text><text x="1414.1" y="0" transform="matrix(1,0,0,1.11,0,696.75)" class="lb">TliI</text><text x="1504.4" y="0" transform="matrix(1,0,0,1.11,0,696.75)" class="lb">HincII</text><text x="1577.3" y="0" transform="matrix(1,0,0,1.11,0,696.75)" class="lb">XcmI</text><text x="1665.4" y="0" transform="matrix(1,0,0,1.11,0,696.75)" class="lb">EcoRII</text><text x="952.6" y="0" transform="matrix(1,0,0,1.11,0,718.00)" class="lb">AvrII</text><text x="1034.5" y="0" transform="matrix(1,0,0,1.11,0,718.00)" class="lb">BtsIMutI</text><text x="1114.8" y="0" transform="matrix(1,0,0,1.11,0,718.00)" class="lb">PciI</text><text x="1170.5" y="0" transform="matrix(1,0,0,1.11,0,718.00)" class="lb">Bsu36I</text><text x="1238.2" y="0" transform="matrix(1,0,0,1.11,0,718.00)" class="lb">BpmI</text><text x="1299.6" y="0" transform="matrix(1,0,0,1.11,0,718.00)" class="lb">Eco91I</text><text x="1363.8" y="0" transform="matrix(1,0,0,1.11,0,718.00)" class="lb">SmoI</text><text x="1414.1" y="0" transform="matrix(1,0,0,1.11,0,718.00)" class="lb">SmoI</text><text x="1491" y="0" transform="matrix(1,0,0,1.11,0,718.00)" class="lb">NciI</text><text x="1562.7" y="0" transform="matrix(1,0,0,1.11,0,718.00)" class="lb">ApoI</text><text x="1665.4" y="0" transform="matrix(1,0,0,1.11,0,718.00)" class="lb">PspGI</text><text x="1717.6" y="0" transform="matrix(1,0,0,1.11,0,718.00)" class="lb">MlyI</text><text x="946.9" y="0" transform="matrix(1,0,0,1.11,0,739.25)" class="lb">BspOI</text><text x="1034" y="0" transform="matrix(1,0,0,1.11,0,739.25)" class="lb">FspAI</text><text x="1105.6" y="0" transform="matrix(1,0,0,1.11,0,739.25)" class="lb">NciI</text><text x="1163.2" y="0" transform="matrix(1,0,0,1.11,0,739.25)" class="lb">Bsu15I</text><text x="1228.5" y="0" transform="matrix(1,0,0,1.11,0,739.25)" class="lb">HaeII</text><text x="1299.6" y="0" transform="matrix(1,0,0,1.11,0,739.25)" class="lb">BstEII</text><text x="1363.8" y="0" transform="matrix(1,0,0,1.11,0,739.25)" class="lb">SmlI</text><text x="1414.1" y="0" transform="matrix(1,0,0,1.11,0,739.25)" class="lb">SmlI</text><text x="1491" y="0" transform="matrix(1,0,0,1.11,0,739.25)" class="lb">BcnI</text><text x="1557.3" y="0" transform="matrix(1,0,0,1.11,0,739.25)" class="lb">SfiI</text><text x="1671" y="0" transform="matrix(1,0,0,1.11,0,739.25)" class="lb">BccI</text><text x="1710.3" y="0" transform="matrix(1,0,0,1.11,0,739.25)" class="lb">TspRI</text><text x="946.9" y="0" transform="matrix(1,0,0,1.11,0,760.50)" class="lb">AluI</text><text x="1034" y="0" transform="matrix(1,0,0,1.11,0,760.50)" class="lb">NsbI</text><text x="1077.6" y="0" transform="matrix(1,0,0,1.11,0,760.50)" class="lb">SfoI</text><text x="1163.2" y="0" transform="matrix(1,0,0,1.11,0,760.50)" class="lb">BspDI</text><text x="1219.4" y="0" transform="matrix(1,0,0,1.11,0,760.50)" class="lb">BstYI</text><text x="1276.7" y="0" transform="matrix(1,0,0,1.11,0,760.50)" class="lb">Cfr10I</text><text x="1354.6" y="0" transform="matrix(1,0,0,1.11,0,760.50)" class="lb">AjiI</text><text x="1414.1" y="0" transform="matrix(1,0,0,1.11,0,760.50)" class="lb">AvaI</text><text x="1482" y="0" transform="matrix(1,0,0,1.11,0,760.50)" class="lb">MboII</text><text x="1557.3" y="0" transform="matrix(1,0,0,1.11,0,760.50)" class="lb">BglI</text><text x="1603.5" y="0" transform="matrix(1,0,0,1.11,0,760.50)" class="lb">FokI</text><text x="1666.1" y="0" transform="matrix(1,0,0,1.11,0,760.50)" class="lb">BccI</text><text x="1710.3" y="0" transform="matrix(1,0,0,1.11,0,760.50)" class="lb">TscAI</text><text x="946.9" y="0" transform="matrix(1,0,0,1.11,0,781.75)" class="lb">BmtI</text><text x="1034" y="0" transform="matrix(1,0,0,1.11,0,781.75)" class="lb">FspI</text><text x="1077.6" y="0" transform="matrix(1,0,0,1.11,0,781.75)" class="lb">EheI</text><text x="1121.9" y="0" transform="matrix(1,0,0,1.11,0,781.75)" class="lb">EcoP15I</text><text x="1219.4" y="0" transform="matrix(1,0,0,1.11,0,781.75)" class="lb">BglII</text><text x="1276.7" y="0" transform="matrix(1,0,0,1.11,0,781.75)" class="lb">BsrFI</text><text x="1352.1" y="0" transform="matrix(1,0,0,1.11,0,781.75)" class="lb">HgaI</text><text x="1401.9" y="0" transform="matrix(1,0,0,1.11,0,781.75)" class="lb">XmnI</text><text x="1456.6" y="0" transform="matrix(1,0,0,1.11,0,781.75)" class="lb">BalI</text><text x="1501" y="0" transform="matrix(1,0,0,1.11,0,781.75)" class="lb">Psp1406I</text><text x="1583.6" y="0" transform="matrix(1,0,0,1.11,0,781.75)" class="lb">BfuI</text><text x="1644.3" y="0" transform="matrix(1,0,0,1.11,0,781.75)" class="lb">Hpy188III</text><text x="946" y="0" transform="matrix(1,0,0,1.11,0,803.00)" class="lb">NheI</text><text x="995.5" y="0" transform="matrix(1,0,0,1.11,0,803.00)" class="lb">BsgI</text><text x="1040.2" y="0" transform="matrix(1,0,0,1.11,0,803.00)" class="lb">TscAI</text><text x="1105.6" y="0" transform="matrix(1,0,0,1.11,0,803.00)" class="lb">BcnI</text><text x="1163.2" y="0" transform="matrix(1,0,0,1.11,0,803.00)" class="lb">ClaI</text><text x="1219.4" y="0" transform="matrix(1,0,0,1.11,0,803.00)" class="lb">PsuI</text><text x="1267.5" y="0" transform="matrix(1,0,0,1.11,0,803.00)" class="lb">PspOMI</text><text x="1352.1" y="0" transform="matrix(1,0,0,1.11,0,803.00)" class="lb">CseI</text><text x="1401.9" y="0" transform="matrix(1,0,0,1.11,0,803.00)" class="lb">PcmI</text><text x="1447.6" y="0" transform="matrix(1,0,0,1.11,0,803.00)" class="lb">BseYI</text><text x="1501" y="0" transform="matrix(1,0,0,1.11,0,803.00)" class="lb">AclI</text><text x="1555.6" y="0" transform="matrix(1,0,0,1.11,0,803.00)" class="lb">MboII</text><text x="1642.3" y="0" transform="matrix(1,0,0,1.11,0,803.00)" class="lb">AluI</text><text x="1709.1" y="0" transform="matrix(1,0,0,1.11,0,803.00)" class="lb">HpyAV</text><rect x="1284.2" y="211.0" width="1.2" height="616.0" fill="#b4b4b8"/><rect x="1284.2" y="232.2" width="1.2" height="594.8" fill="#b4b4b8"/><rect x="1417.0" y="232.2" width="1.2" height="594.8" fill="#b4b4b8"/><rect x="1284.2" y="253.5" width="1.2" height="573.5" fill="#b4b4b8"/><rect x="1417.0" y="253.5" width="1.2" height="573.5" fill="#b4b4b8"/><rect x="1282.5" y="274.8" width="1.2" height="552.2" fill="#b4b4b8"/><rect x="1417.0" y="274.8" width="1.2" height="552.2" fill="#b4b4b8"/><rect x="1282.5" y="296.0" width="1.2" height="531.0" fill="#b4b4b8"/><rect x="1417.0" y="296.0" width="1.2" height="531.0" fill="#b4b4b8"/><rect x="1085.1" y="317.2" width="1.2" height="509.8" fill="#b4b4b8"/><rect x="1282.5" y="317.2" width="1.2" height="509.8" fill="#b4b4b8"/><rect x="1417.0" y="317.2" width="1.2" height="509.8" fill="#b4b4b8"/><rect x="1084.4" y="338.5" width="1.2" height="488.5" fill="#b4b4b8"/><rect x="1282.5" y="338.5" width="1.2" height="488.5" fill="#b4b4b8"/><rect x="1399.6" y="338.5" width="1.2" height="488.5" fill="#b4b4b8"/><rect x="1082.7" y="359.8" width="1.2" height="467.2" fill="#b4b4b8"/><rect x="1282.5" y="359.8" width="1.2" height="467.2" fill="#b4b4b8"/><rect x="1397.1" y="359.8" width="1.2" height="467.2" fill="#b4b4b8"/><rect x="1082.7" y="381.0" width="1.2" height="446.0" fill="#b4b4b8"/><rect x="1274.0" y="381.0" width="1.2" height="446.0" fill="#b4b4b8"/><rect x="1397.1" y="381.0" width="1.2" height="446.0" fill="#b4b4b8"/><rect x="1080.2" y="402.2" width="1.2" height="424.8" fill="#b4b4b8"/><rect x="1274.0" y="402.2" width="1.2" height="424.8" fill="#b4b4b8"/><rect x="1397.1" y="402.2" width="1.2" height="424.8" fill="#b4b4b8"/><rect x="1080.2" y="423.5" width="1.2" height="403.5" fill="#b4b4b8"/><rect x="1274.0" y="423.5" width="1.2" height="403.5" fill="#b4b4b8"/><rect x="1397.1" y="423.5" width="1.2" height="403.5" fill="#b4b4b8"/><rect x="1080.2" y="444.8" width="1.2" height="382.2" fill="#b4b4b8"/><rect x="1274.0" y="444.8" width="1.2" height="382.2" fill="#b4b4b8"/><rect x="1396.4" y="444.8" width="1.2" height="382.2" fill="#b4b4b8"/><rect x="1080.2" y="466.0" width="1.2" height="361.0" fill="#b4b4b8"/><rect x="1274.0" y="466.0" width="1.2" height="361.0" fill="#b4b4b8"/><rect x="1396.4" y="466.0" width="1.2" height="361.0" fill="#b4b4b8"/><rect x="1080.2" y="487.2" width="1.2" height="339.8" fill="#b4b4b8"/><rect x="1274.0" y="487.2" width="1.2" height="339.8" fill="#b4b4b8"/><rect x="1396.4" y="487.2" width="1.2" height="339.8" fill="#b4b4b8"/><rect x="1079.6" y="508.5" width="1.2" height="318.5" fill="#b4b4b8"/><rect x="1274.1" y="508.5" width="1.2" height="318.5" fill="#b4b4b8"/><rect x="1398.4" y="508.5" width="1.2" height="318.5" fill="#b4b4b8"/><rect x="1604.4" y="508.5" width="1.2" height="318.5" fill="#b4b4b8"/><rect x="1065.4" y="529.8" width="1.2" height="297.2" fill="#b4b4b8"/><rect x="1271.8" y="529.8" width="1.2" height="297.2" fill="#b4b4b8"/><rect x="1398.4" y="529.8" width="1.2" height="297.2" fill="#b4b4b8"/><rect x="1604.4" y="529.8" width="1.2" height="297.2" fill="#b4b4b8"/><rect x="985.5" y="551.0" width="1.2" height="276.0" fill="#b4b4b8"/><rect x="1065.4" y="551.0" width="1.2" height="276.0" fill="#b4b4b8"/><rect x="1271.8" y="551.0" width="1.2" height="276.0" fill="#b4b4b8"/><rect x="1398.4" y="551.0" width="1.2" height="276.0" fill="#b4b4b8"/><rect x="1601.9" y="551.0" width="1.2" height="276.0" fill="#b4b4b8"/><rect x="983.9" y="572.2" width="1.2" height="254.8" fill="#b4b4b8"/><rect x="1065.4" y="572.2" width="1.2" height="254.8" fill="#b4b4b8"/><rect x="1266.0" y="572.2" width="1.2" height="254.8" fill="#b4b4b8"/><rect x="1388.7" y="572.2" width="1.2" height="254.8" fill="#b4b4b8"/><rect x="1460.4" y="572.2" width="1.2" height="254.8" fill="#b4b4b8"/><rect x="1601.9" y="572.2" width="1.2" height="254.8" fill="#b4b4b8"/><rect x="1739.0" y="572.2" width="1.2" height="254.8" fill="#b4b4b8"/><rect x="983.9" y="593.5" width="1.2" height="233.5" fill="#b4b4b8"/><rect x="1065.4" y="593.5" width="1.2" height="233.5" fill="#b4b4b8"/><rect x="1266.0" y="593.5" width="1.2" height="233.5" fill="#b4b4b8"/><rect x="1388.7" y="593.5" width="1.2" height="233.5" fill="#b4b4b8"/><rect x="1460.4" y="593.5" width="1.2" height="233.5" fill="#b4b4b8"/><rect x="1594.6" y="593.5" width="1.2" height="233.5" fill="#b4b4b8"/><rect x="1738.4" y="593.5" width="1.2" height="233.5" fill="#b4b4b8"/><rect x="981.6" y="614.8" width="1.2" height="212.2" fill="#b4b4b8"/><rect x="1058.5" y="614.8" width="1.2" height="212.2" fill="#b4b4b8"/><rect x="1121.6" y="614.8" width="1.2" height="212.2" fill="#b4b4b8"/><rect x="1175.4" y="614.8" width="1.2" height="212.2" fill="#b4b4b8"/><rect x="1248.8" y="614.8" width="1.2" height="212.2" fill="#b4b4b8"/><rect x="1388.7" y="614.8" width="1.2" height="212.2" fill="#b4b4b8"/><rect x="1442.1" y="614.8" width="1.2" height="212.2" fill="#b4b4b8"/><rect x="1594.6" y="614.8" width="1.2" height="212.2" fill="#b4b4b8"/><rect x="1737.0" y="614.8" width="1.2" height="212.2" fill="#b4b4b8"/><rect x="967.9" y="636.0" width="1.2" height="191.0" fill="#b4b4b8"/><rect x="1049.8" y="636.0" width="1.2" height="191.0" fill="#b4b4b8"/><rect x="1121.1" y="636.0" width="1.2" height="191.0" fill="#b4b4b8"/><rect x="1183.5" y="636.0" width="1.2" height="191.0" fill="#b4b4b8"/><rect x="1248.8" y="636.0" width="1.2" height="191.0" fill="#b4b4b8"/><rect x="1367.6" y="636.0" width="1.2" height="191.0" fill="#b4b4b8"/><rect x="1442.1" y="636.0" width="1.2" height="191.0" fill="#b4b4b8"/><rect x="1527.1" y="636.0" width="1.2" height="191.0" fill="#b4b4b8"/><rect x="1587.4" y="636.0" width="1.2" height="191.0" fill="#b4b4b8"/><rect x="1670.6" y="636.0" width="1.2" height="191.0" fill="#b4b4b8"/><rect x="967.8" y="657.2" width="1.2" height="169.8" fill="#b4b4b8"/><rect x="1048.2" y="657.2" width="1.2" height="169.8" fill="#b4b4b8"/><rect x="1118.6" y="657.2" width="1.2" height="169.8" fill="#b4b4b8"/><rect x="1226.4" y="657.2" width="1.2" height="169.8" fill="#b4b4b8"/><rect x="1367.6" y="657.2" width="1.2" height="169.8" fill="#b4b4b8"/><rect x="1437.3" y="657.2" width="1.2" height="169.8" fill="#b4b4b8"/><rect x="1527.1" y="657.2" width="1.2" height="169.8" fill="#b4b4b8"/><rect x="1582.5" y="657.2" width="1.2" height="169.8" fill="#b4b4b8"/><rect x="1670.6" y="657.2" width="1.2" height="169.8" fill="#b4b4b8"/><rect x="964.9" y="678.5" width="1.2" height="148.5" fill="#b4b4b8"/><rect x="1044.0" y="678.5" width="1.2" height="148.5" fill="#b4b4b8"/><rect x="1118.6" y="678.5" width="1.2" height="148.5" fill="#b4b4b8"/><rect x="1174.3" y="678.5" width="1.2" height="148.5" fill="#b4b4b8"/><rect x="1223.6" y="678.5" width="1.2" height="148.5" fill="#b4b4b8"/><rect x="1280.5" y="678.5" width="1.2" height="148.5" fill="#b4b4b8"/><rect x="1367.6" y="678.5" width="1.2" height="148.5" fill="#b4b4b8"/><rect x="1427.6" y="678.5" width="1.2" height="148.5" fill="#b4b4b8"/><rect x="1517.9" y="678.5" width="1.2" height="148.5" fill="#b4b4b8"/><rect x="1566.5" y="678.5" width="1.2" height="148.5" fill="#b4b4b8"/><rect x="1670.6" y="678.5" width="1.2" height="148.5" fill="#b4b4b8"/><rect x="1715.3" y="678.5" width="1.2" height="148.5" fill="#b4b4b8"/><rect x="956.4" y="699.8" width="1.2" height="127.2" fill="#b4b4b8"/><rect x="1041.7" y="699.8" width="1.2" height="127.2" fill="#b4b4b8"/><rect x="1085.3" y="699.8" width="1.2" height="127.2" fill="#b4b4b8"/><rect x="1174.3" y="699.8" width="1.2" height="127.2" fill="#b4b4b8"/><rect x="1242.0" y="699.8" width="1.2" height="127.2" fill="#b4b4b8"/><rect x="1358.4" y="699.8" width="1.2" height="127.2" fill="#b4b4b8"/><rect x="1417.9" y="699.8" width="1.2" height="127.2" fill="#b4b4b8"/><rect x="1508.2" y="699.8" width="1.2" height="127.2" fill="#b4b4b8"/><rect x="1581.1" y="699.8" width="1.2" height="127.2" fill="#b4b4b8"/><rect x="1671.2" y="699.8" width="1.2" height="127.2" fill="#b4b4b8"/><rect x="956.4" y="721.0" width="1.2" height="106.0" fill="#b4b4b8"/><rect x="1038.3" y="721.0" width="1.2" height="106.0" fill="#b4b4b8"/><rect x="1118.6" y="721.0" width="1.2" height="106.0" fill="#b4b4b8"/><rect x="1174.3" y="721.0" width="1.2" height="106.0" fill="#b4b4b8"/><rect x="1242.0" y="721.0" width="1.2" height="106.0" fill="#b4b4b8"/><rect x="1303.4" y="721.0" width="1.2" height="106.0" fill="#b4b4b8"/><rect x="1367.6" y="721.0" width="1.2" height="106.0" fill="#b4b4b8"/><rect x="1417.9" y="721.0" width="1.2" height="106.0" fill="#b4b4b8"/><rect x="1494.8" y="721.0" width="1.2" height="106.0" fill="#b4b4b8"/><rect x="1566.5" y="721.0" width="1.2" height="106.0" fill="#b4b4b8"/><rect x="1671.2" y="721.0" width="1.2" height="106.0" fill="#b4b4b8"/><rect x="1737.9" y="721.0" width="1.2" height="106.0" fill="#b4b4b8"/><rect x="950.7" y="742.2" width="1.2" height="84.8" fill="#b4b4b8"/><rect x="1037.8" y="742.2" width="1.2" height="84.8" fill="#b4b4b8"/><rect x="1109.4" y="742.2" width="1.2" height="84.8" fill="#b4b4b8"/><rect x="1167.0" y="742.2" width="1.2" height="84.8" fill="#b4b4b8"/><rect x="1232.3" y="742.2" width="1.2" height="84.8" fill="#b4b4b8"/><rect x="1303.4" y="742.2" width="1.2" height="84.8" fill="#b4b4b8"/><rect x="1367.6" y="742.2" width="1.2" height="84.8" fill="#b4b4b8"/><rect x="1417.9" y="742.2" width="1.2" height="84.8" fill="#b4b4b8"/><rect x="1494.8" y="742.2" width="1.2" height="84.8" fill="#b4b4b8"/><rect x="1561.1" y="742.2" width="1.2" height="84.8" fill="#b4b4b8"/><rect x="1665.6" y="742.2" width="1.2" height="84.8" fill="#b4b4b8"/><rect x="1740.2" y="742.2" width="1.2" height="84.8" fill="#b4b4b8"/><rect x="950.7" y="763.5" width="1.2" height="63.5" fill="#b4b4b8"/><rect x="1037.8" y="763.5" width="1.2" height="63.5" fill="#b4b4b8"/><rect x="1081.4" y="763.5" width="1.2" height="63.5" fill="#b4b4b8"/><rect x="1167.0" y="763.5" width="1.2" height="63.5" fill="#b4b4b8"/><rect x="1223.2" y="763.5" width="1.2" height="63.5" fill="#b4b4b8"/><rect x="1280.5" y="763.5" width="1.2" height="63.5" fill="#b4b4b8"/><rect x="1358.4" y="763.5" width="1.2" height="63.5" fill="#b4b4b8"/><rect x="1417.9" y="763.5" width="1.2" height="63.5" fill="#b4b4b8"/><rect x="1485.8" y="763.5" width="1.2" height="63.5" fill="#b4b4b8"/><rect x="1561.1" y="763.5" width="1.2" height="63.5" fill="#b4b4b8"/><rect x="1607.3" y="763.5" width="1.2" height="63.5" fill="#b4b4b8"/><rect x="1661.6" y="763.5" width="1.2" height="63.5" fill="#b4b4b8"/><rect x="1742.0" y="763.5" width="1.2" height="63.5" fill="#b4b4b8"/><rect x="950.7" y="784.8" width="1.2" height="42.2" fill="#b4b4b8"/><rect x="1037.8" y="784.8" width="1.2" height="42.2" fill="#b4b4b8"/><rect x="1081.4" y="784.8" width="1.2" height="42.2" fill="#b4b4b8"/><rect x="1125.7" y="784.8" width="1.2" height="42.2" fill="#b4b4b8"/><rect x="1223.2" y="784.8" width="1.2" height="42.2" fill="#b4b4b8"/><rect x="1280.5" y="784.8" width="1.2" height="42.2" fill="#b4b4b8"/><rect x="1355.9" y="784.8" width="1.2" height="42.2" fill="#b4b4b8"/><rect x="1405.7" y="784.8" width="1.2" height="42.2" fill="#b4b4b8"/><rect x="1460.4" y="784.8" width="1.2" height="42.2" fill="#b4b4b8"/><rect x="1504.8" y="784.8" width="1.2" height="42.2" fill="#b4b4b8"/><rect x="1587.4" y="784.8" width="1.2" height="42.2" fill="#b4b4b8"/><rect x="1648.1" y="784.8" width="1.2" height="42.2" fill="#b4b4b8"/><rect x="949.8" y="806.0" width="1.2" height="21.0" fill="#b4b4b8"/><rect x="999.3" y="806.0" width="1.2" height="21.0" fill="#b4b4b8"/><rect x="1044.0" y="806.0" width="1.2" height="21.0" fill="#b4b4b8"/><rect x="1109.4" y="806.0" width="1.2" height="21.0" fill="#b4b4b8"/><rect x="1167.0" y="806.0" width="1.2" height="21.0" fill="#b4b4b8"/><rect x="1223.2" y="806.0" width="1.2" height="21.0" fill="#b4b4b8"/><rect x="1271.3" y="806.0" width="1.2" height="21.0" fill="#b4b4b8"/><rect x="1355.9" y="806.0" width="1.2" height="21.0" fill="#b4b4b8"/><rect x="1405.7" y="806.0" width="1.2" height="21.0" fill="#b4b4b8"/><rect x="1451.4" y="806.0" width="1.2" height="21.0" fill="#b4b4b8"/><rect x="1504.8" y="806.0" width="1.2" height="21.0" fill="#b4b4b8"/><rect x="1559.4" y="806.0" width="1.2" height="21.0" fill="#b4b4b8"/><rect x="1646.1" y="806.0" width="1.2" height="21.0" fill="#b4b4b8"/><rect x="1752.4" y="806.0" width="1.2" height="21.0" fill="#b4b4b8"/><rect x="942" y="827" width="823" height="1.6" fill="#cfcfd1"/><rect x="1090.8" y="828.5" width="1.2" height="9.5" fill="#999"/><text x="1091.3" y="0" transform="matrix(1,0,0,1.08,0,852.00)" class="rl" style="font-size:12.6px">200</text><rect x="1240.1" y="828.5" width="1.2" height="9.5" fill="#999"/><text x="1240.6" y="0" transform="matrix(1,0,0,1.08,0,852.00)" class="rl" style="font-size:12.6px">400</text><rect x="1389.4" y="828.5" width="1.2" height="9.5" fill="#999"/><text x="1389.9" y="0" transform="matrix(1,0,0,1.08,0,852.00)" class="rl" style="font-size:12.6px">600</text><rect x="1538.7" y="828.5" width="1.2" height="9.5" fill="#999"/><text x="1539.2" y="0" transform="matrix(1,0,0,1.08,0,852.00)" class="rl" style="font-size:12.6px">800</text><rect x="1688.0" y="828.5" width="1.2" height="9.5" fill="#999"/><text x="1688.5" y="0" transform="matrix(1,0,0,1.08,0,852.00)" class="rl" style="font-size:12.6px">1,000</text><polygon points="944,867.8 1757,867.8 1765.5,875.5 1757,883.2 944,883.2" fill="#a9c6e6" stroke="#7393ba" stroke-width="1.5"/><text x="1346" y="0" transform="matrix(1,0,0,1.1,0,880.50)" class="ft" text-anchor="middle">translation</text><polygon points="944,900.2 960,900.2 968.5,907.95 960,915.7 944,915.7" fill="#f7ae92" stroke="#d98b70" stroke-width="1"/><polygon points="968.5,900.2 977,900.2 985.6,907.95 977,915.7 968.5,915.7" fill="#9fd7c0" stroke="#6fae95" stroke-width="1"/><polygon points="985,900.2 1644,900.2 1652,907.95 1644,915.7 985,915.7" fill="#feb6da" stroke="#cf7fa8" stroke-width="1"/><text x="1307" y="0" transform="matrix(1,0,0,1.1,0,912.70)" class="ft" text-anchor="middle">Coding_Sequence_Tyr1</text><polygon points="1651.3,900.2 1658,900.2 1667,907.95 1658,915.7 1651.3,915.7" fill="#fdeaa2" stroke="#d6c77c" stroke-width="1"/><rect x="1667" y="901" width="1.5" height="14" fill="#999"/><polygon points="1668.5,900.2 1757,900.2 1766,907.95 1757,915.7 1668.5,915.7" fill="#c7f78d" stroke="#8dc65a" stroke-width="1"/><text x="1708" y="0" transform="matrix(1,0,0,1.1,0,912.70)" class="ft" text-anchor="middle">Te...)</text><rect x="943.1" y="158" width="3.5" height="762" fill="#000"/><polygon points="943.1,158 952.7,158 946.6,170.5" fill="#000"/></g></svg><div class="a" style="left:0;top:0;width:68px;height:990px;background:#020bb0"></div><svg class="a" style="left:0;top:0" width="68" height="990">
<g transform="translate(8,8) scale(0.0505)">
<path d="M325,472 Q362,445 368,385 Q395,282 505,280 Q615,282 642,385 Q648,445 685,472 Q505,500 325,472 Z" fill="#e6e7ee"/>
<ellipse cx="430" cy="410" rx="20" ry="14" fill="#020bb0"/><ellipse cx="578" cy="410" rx="20" ry="14" fill="#020bb0"/>
<path d="M505,505 C430,530 410,610 505,662 C600,610 580,530 505,505 Z" stroke="#e6e7ee" stroke-width="34" fill="none"/>
<path d="M505,662 C430,700 420,730 425,770 M505,662 C580,700 590,730 585,770" stroke="#e6e7ee" stroke-width="34" fill="none"/>
<path d="M470,565 H540 M470,605 H540 M478,735 H532" stroke="#e6e7ee" stroke-width="22"/>
</g>
<path d="M29.8,97.5 v-2.3 a1,1 0 0 1 1,-1 h6 a1,1 0 0 1 1,1 v2.3" stroke="#e6e7ee" stroke-width="1.6" fill="none"/>
<path d="M27.2,97 h14 a1.8,1.8 0 0 1 1.8,1.8 v4.1 h-17.6 v-4.1 a1.8,1.8 0 0 1 1.8,-1.8 Z" fill="#e6e7ee"/>
<path d="M25.2,104 h7 v1.5 a0.6,0.6 0 0 0 0.6,0.6 h1.8 a0.6,0.6 0 0 0 0.6,-0.6 v-1.5 h7.6 v4.8 a1.9,1.9 0 0 1 -1.9,1.9 h-13.8 a1.9,1.9 0 0 1 -1.9,-1.9 Z" fill="#e6e7ee"/>
<circle cx="32" cy="168" r="6.1" stroke="#e6e7ee" stroke-width="2" fill="none"/>
<path d="M36.5,172.5 L41.6,177.6" stroke="#e6e7ee" stroke-width="2" stroke-linecap="round"/>
<path d="M33.8,229.6 V246 M25.3,237.8 H42" stroke="#e6e7ee" stroke-width="2" stroke-linecap="round"/>
<circle cx="28.2" cy="329.8" r="1.9" fill="#e6e7ee"/><circle cx="33.6" cy="329.8" r="1.9" fill="#e6e7ee"/><circle cx="39.1" cy="329.8" r="1.9" fill="#e6e7ee"/>
<rect x="26.2" y="882.2" width="14.8" height="15.3" rx="2" fill="#e2e3ea"/>
<path d="M29.8,889.5 l2.6,2.6 l5,-5" stroke="#020bb0" stroke-width="1.8" fill="none"/>
<circle cx="24.6" cy="883.4" r="5" fill="#020bb0"/><circle cx="24.6" cy="883.4" r="4.2" fill="#c40000"/>
<circle cx="33.5" cy="957.2" r="17.6" fill="#5b8e00"/>
</svg><div class="a" style="left:16px;top:948px;width:35px;text-align:center;font-size:15px;color:#fff">VR</div><div class="a" style="left:68px;top:0;width:1785px;height:50px;background:#f5f6f8"></div><div class="a" style="left:68px;top:0;width:1785px;height:2px;background:#dde2ea"></div><div class="a" style="left:68px;top:47px;width:1785px;height:4px;background:linear-gradient(#f2f3f5,#e6e8eb)"></div><div class="a" style="left:390px;top:11px;width:313px;height:41px;background:#fff;border-radius:6px 6px 0 0"></div><svg class="a" style="left:93px;top:22px" width="14" height="18" viewBox="0 0 14 18">
<path d="M1.2,1 C1.5,6 12,10 12.6,17 M12.8,1 C12.5,6 2,10 1.4,17" stroke="#b3b4b8" stroke-width="1.5" fill="none"/>
<path d="M1.5,2.2 H12.5 M3,4.3 H11 M3,13.6 H11 M1.5,15.8 H12.5" stroke="#b3b4b8" stroke-width="1.3"/></svg><svg class="a" style="left:405px;top:22px" width="14" height="18" viewBox="0 0 14 18">
<path d="M1.2,1 C1.5,6 12,10 12.6,17 M12.8,1 C12.5,6 2,10 1.4,17" stroke="#4b60e2" stroke-width="1.5" fill="none"/>
<path d="M1.5,2.2 H12.5 M3,4.3 H11 M3,13.6 H11 M1.5,15.8 H12.5" stroke="#4b60e2" stroke-width="1.3"/></svg><div class="a" style="left:114.3px;top:21.6px;font-size:16.5px;color:#2e3036;display:inline-block;transform:scaleX(0.912);transform-origin:0 0;">NC_001416</div><div class="a" style="left:427.4px;top:21.6px;font-size:16.5px;color:#4a5ee0;display:inline-block;transform:scaleX(0.94);transform-origin:0 0;">Tyr1_expression_test</div><svg class="a" style="left:672px;top:22px" width="17" height="17"><path d="M2.2,2.1 L14.7,14.5 M14.7,2.1 L2.2,14.5" stroke="#c9cacf" stroke-width="1.6"/></svg><div class="a" style="left:68px;top:96px;width:861px;height:1px;background:#d7d9dc"></div><div class="a" style="left:69px;top:95.3px;width:132px;height:1.6px;background:#3e63f0"></div><div class="tab" style="left:83px;color:#4660ee;display:inline-block;transform:scaleX(0.853);transform-origin:0 0;">SEQUENCE MAP</div><div class="a" style="left:68px;top:140px;width:861px;height:1px;background:#d7d9dc"></div><div class="a" style="left:929px;top:50px;width:1px;height:910px;background:#d5d6d9"></div><div class="a" style="left:919.3px;top:146px;width:9.5px;height:814px;background:#eeeff1"></div><div class="a" style="left:919.3px;top:146px;width:9.5px;height:156.5px;background:#dcdde0"></div><div class="a" style="left:930px;top:96px;width:862px;height:1px;background:#d7d9dc"></div><div class="a" style="left:1792px;top:96px;width:61px;height:1px;background:#d7d9dc"></div><div class="a" style="left:930px;top:95.3px;width:107px;height:1.6px;background:#3e63f0"></div><div class="tab" style="left:945px;color:#4660ee;display:inline-block;transform:scaleX(0.848);transform-origin:0 0;">LINEAR MAP</div><div class="tab" style="left:1052px;display:inline-block;transform:scaleX(0.839);transform-origin:0 0;">BIOCHEMICAL PROPERTIES</div><svg class="a" style="left:1228px;top:66px" width="14" height="12"><path d="M2,1 L11,10 M11,1 L2,10" stroke="#8d8f96" stroke-width="1.3"/></svg><div class="tab" style="left:1270px;display:inline-block;transform:scaleX(0.843);transform-origin:0 0;">RELEVANT ITEMS</div><div class="tab" style="left:1408px;display:inline-block;transform:scaleX(0.845);transform-origin:0 0;">ENTITY MAP</div><div class="tab" style="left:1515px;display:inline-block;transform:scaleX(0.845);transform-origin:0 0;">METADATA</div><svg class="a" style="left:1655px;top:68px" width="24" height="10"><circle cx="5.5" cy="4.8" r="1.7" fill="#a8aab0"/><circle cx="11.8" cy="4.8" r="1.7" fill="#a8aab0"/><circle cx="18" cy="4.8" r="1.7" fill="#a8aab0"/></svg><div class="a" style="left:930px;top:140px;width:862px;height:1px;background:#d7d9dc"></div><div class="a" style="left:1791.2px;top:97px;width:1px;height:863px;background:#d7d9dc"></div><svg class="a" style="left:0;top:100px" width="1853" height="36">
<path d="M84.2,17.4 H98.9" stroke="#1e1e22" stroke-width="2.2" stroke-linecap="round"/>
<rect x="109.5" y="16.3" width="74.1" height="4.3" rx="2.1" fill="#ececee" stroke="#9a9b9f" stroke-width="0.9"/>
<rect x="109.9" y="16.7" width="14" height="3.5" rx="1.5" fill="#f5a623"/><circle cx="129.6" cy="18.3" r="7.6" fill="#fff" stroke="#bdbec2" stroke-width="0.9"/>
<path d="M194.1,17.4 H208.70000000000002 M201.4,10.2 V24.6" stroke="#1e1e22" stroke-width="2.2" stroke-linecap="round"/>
</svg><svg class="a" style="left:0;top:100px" width="1853" height="36">
<path d="M945.5,17.4 H960.2" stroke="#1e1e22" stroke-width="2.2" stroke-linecap="round"/>
<rect x="970.8" y="16.3" width="73.7" height="4.3" rx="2.1" fill="#ececee" stroke="#9a9b9f" stroke-width="0.9"/>
<circle cx="969.7" cy="18.3" r="7.6" fill="#fff" stroke="#bdbec2" stroke-width="0.9"/>
<path d="M1055.2,17.4 H1069.8 M1062.5,10.2 V24.6" stroke="#1e1e22" stroke-width="2.2" stroke-linecap="round"/>
</svg><div class="btn dk" style="left:455px;top:104px;width:95px;height:28px;border-radius:4px 0 0 4px;text-align:left;padding-left:15.4px;line-height:29.4px;font-size:15px"><span style="display:inline-block;transform:scaleX(1.06);transform-origin:0 0;">Create</span></div><svg class="a" style="left:523.5px;top:115.3px" width="12.5" height="8.6"><path d="M1,1.2 L6.25,6.8 L11.5,1.2" stroke="#fff" stroke-width="1.5" fill="none"/></svg><div class="btn dk" style="left:551px;top:104px;width:104px;height:28px;border-radius:0;text-align:left;padding-left:15.5px;line-height:29.4px;font-size:15px"><span style="display:inline-block;transform:scaleX(1.04);transform-origin:0 0;">Analyze</span></div><svg class="a" style="left:628.5px;top:115.3px" width="12.5" height="8.6"><path d="M1,1.2 L6.25,6.8 L11.5,1.2" stroke="#fff" stroke-width="1.5" fill="none"/></svg><div class="btn lt" style="left:656.3px;top:104.2px;width:67.3px;height:27.6px;line-height:27.6px;text-align:left;padding-left:15.4px;font-size:15px"><span style="display:inline-block;transform:scaleX(1.05);transform-origin:0 0;">Copy</span></div><div class="btn lt" style="left:726.1px;top:104.2px;width:111.7px;height:27.6px;line-height:27.6px;text-align:left;padding-left:15.4px;font-size:15px"><span style="display:inline-block;transform:scaleX(1.018);transform-origin:0 0;">Create PDF</span></div><div class="btn lt" style="left:840.3px;top:104.2px;width:44.6px;height:27.8px;border-radius:4px 0 0 4px"></div><div class="btn lt" style="left:886.2px;top:104.2px;width:26.7px;height:27.8px;border-radius:0 4px 4px 0"></div><svg class="a" style="left:0;top:0" width="1853" height="140"><polygon points="859.25,117.38 859.25,119.03 857.25,119.96 856.65,121.00 856.83,123.20 855.41,124.02 853.60,122.76 852.40,122.76 850.58,124.02 849.16,123.19 849.35,121.00 848.75,119.96 846.75,119.02 846.75,117.37 848.75,116.44 849.35,115.40 849.17,113.20 850.59,112.38 852.40,113.64 853.60,113.64 855.42,112.38 856.84,113.21 856.65,115.40 857.25,116.44" fill="#1a1a1e"/><circle cx="853" cy="118.2" r="2.1" fill="#e3e4e6"/><circle cx="898" cy="117" r="4.7" stroke="#1a1a1e" stroke-width="1.5" fill="none"/><path d="M901.5,120.5 L905.3,124.2" stroke="#1a1a1e" stroke-width="1.7"/></svg><svg class="a" style="left:865px;top:115px" width="13" height="8.6"><path d="M1,1.2 L6.5,6.8 L12,1.2" stroke="#1a1a1e" stroke-width="1.5" fill="none"/></svg><div class="btn lt" style="left:1587px;top:104.2px;width:110.5px;height:27.6px;line-height:27.6px;text-align:left;padding-left:15.4px;font-size:15px"><span style="display:inline-block;transform:scaleX(1.018);transform-origin:0 0;">Create PDF</span></div><div class="btn lt" style="left:1700px;top:104.2px;width:44.6px;height:27.8px;border-radius:4px 0 0 4px"></div><div class="btn lt" style="left:1746px;top:104.2px;width:28px;height:27.8px;border-radius:0 4px 4px 0"></div><svg class="a" style="left:0;top:0" width="1853" height="140"><polygon points="1720.75,117.38 1720.75,119.03 1718.75,119.96 1718.15,121.00 1718.33,123.20 1716.91,124.02 1715.10,122.76 1713.90,122.76 1712.08,124.02 1710.66,123.19 1710.85,121.00 1710.25,119.96 1708.25,119.02 1708.25,117.37 1710.25,116.44 1710.85,115.40 1710.67,113.20 1712.09,112.38 1713.90,113.64 1715.10,113.64 1716.92,112.38 1718.34,113.21 1718.15,115.40 1718.75,116.44" fill="#1a1a1e"/><circle cx="1714.5" cy="118.2" r="2.1" fill="#e3e4e6"/><circle cx="1760" cy="117" r="4.7" stroke="#1a1a1e" stroke-width="1.5" fill="none"/><path d="M1763.5,120.5 L1767.3,124.2" stroke="#1a1a1e" stroke-width="1.7"/></svg><svg class="a" style="left:1726px;top:115px" width="13" height="8.6"><path d="M1,1.2 L6.5,6.8 L12,1.2" stroke="#1a1a1e" stroke-width="1.5" fill="none"/></svg><div class="btn dk" style="left:1712px;top:59px;width:89px;height:30px;line-height:30.5px;text-align:left;padding-left:32.6px;font-size:15px"><span style="display:inline-block;transform:scaleX(1.03);transform-origin:0 0">Share</span></div><svg class="a" style="left:1723px;top:66px" width="15" height="15"><path d="M5.8,2.5 H2.8 a1,1 0 0 0 -1,1 V12.3 a1,1 0 0 0 1,1 H11.2 a1,1 0 0 0 1,-1 V9" stroke="#fff" stroke-width="1.6" fill="none"/><path d="M8.3,1.6 H13 V6.3 M12.7,1.9 L6.8,7.8" stroke="#fff" stroke-width="1.6" fill="none"/></svg><div class="a" style="left:1809px;top:59px;width:28.8px;height:29.6px;border:1.4px solid #030bb4;border-radius:4px"></div><svg class="a" style="left:1812px;top:64px" width="22" height="20"><rect x="10.6" y="2.9" width="6.4" height="10" rx="1.8" fill="#030bb4"/><path d="M9.5,7.5 H6.7 V15.3 H12 V13.6" stroke="#030bb4" stroke-width="1.6" fill="none"/></svg><svg class="a" style="left:1800px;top:100px" width="53" height="420" viewBox="1800 100 53 420">
<path d="M1816.2,119.9 H1828.6 V135.7 L1822.4,130.4 L1816.2,135.7 Z" fill="#404148"/>
<g stroke="#404148" stroke-width="1.1" fill="none">
<ellipse cx="1817" cy="187.5" rx="2.6" ry="2" /><ellipse cx="1817" cy="194.3" rx="2.6" ry="2"/>
<path d="M1819.3,188.6 L1830,195.2 M1819.3,193.2 L1830,186.6"/>
</g>
<path d="M1814,250.2 H1829 M1825.5,246.8 L1829.2,250.2 L1825.5,253.6 M1830,257.3 H1815 M1818.5,253.9 L1814.8,257.3 L1818.5,260.7" stroke="#404148" stroke-width="1.7" fill="none"/>
<circle cx="1821.8" cy="315.5" r="6.8" stroke="#404148" stroke-width="1.6" fill="none"/>
<path d="M1821.3,311.4 V316.4 H1824.6" stroke="#404148" stroke-width="1.3" fill="none"/>
<rect x="1814" y="371" width="9" height="2.6" fill="#404148"/><rect x="1814" y="374.9" width="15" height="2.6" fill="#404148"/>
<rect x="1814" y="378.8" width="12" height="2.6" fill="#404148"/><rect x="1814" y="382.7" width="16" height="2.6" fill="#404148"/>
<circle cx="1821.8" cy="441" r="4.6" stroke="#404148" stroke-width="1.5" fill="none"/>
<path d="M1821.8,433 V449 M1813.8,441 H1829.8" stroke="#404148" stroke-width="1.5"/>
<circle cx="1821.8" cy="502.8" r="7.5" fill="#46474c"/>
<rect x="1820.6" y="498" width="2.4" height="2.3" fill="#fff"/>
<path d="M1819.3,501.5 H1823 V506.2 H1824.3 V507.3 H1819.3 V506.2 H1820.6 V502.6 H1819.3 Z" fill="#fff"/>
</svg><div class="a" style="left:1228px;top:0;width:562.5px;height:47px;background:#e4e5e7;border-radius:0 0 5px 5px;border:1px solid #cdced2;border-top:none"></div><div class="a" style="left:1228px;top:0;width:563px;height:1.5px;background:#dde2ea"></div><div class="a" style="left:1236px;top:6px;width:430px;height:33px;background:#fff;border-radius:3px 0 0 3px"></div><div class="a" style="left:1249px;top:14px;font-size:14px;color:#222;white-space:nowrap">CCAGGCATCAAATAAAACGAAAGGCTCAGTCGAA<span style="color:#b3b4b8">1 of 1</span></div><div class="a" style="left:1666.5px;top:5.5px;width:86.2px;height:34px;background:#ededef;border:1px solid #c4c5c9"></div><div class="a" style="left:1708.5px;top:6px;width:1px;height:33px;background:#c8c9cd"></div><svg class="a" style="left:1600px;top:0" width="200" height="45"><circle cx="26" cy="20.5" r="7.3" fill="#3d63f0"/><path d="M23.6,18.6 a2.5,2.4 0 1 1 3.4,2.3 c-0.9,0.4 -1,0.9 -1,1.8" stroke="#fff" stroke-width="1.7" fill="none"/><circle cx="26" cy="25.3" r="1.05" fill="#fff"/><path d="M36.5,27 L43.2,20.2" stroke="#1a1a1e" stroke-width="2.6" stroke-linecap="round"/><path d="M41.8,17.5 a3.8,3.8 0 0 1 5.2,-4.6 l-2.3,2.3 l0.4,1.8 l1.8,0.4 l2.3,-2.3 a3.8,3.8 0 0 1 -4.6,5.2 Z" fill="#1a1a1e"/><path d="M82.5,24 L87.8,18.6 L93.1,24" stroke="#1a1a1e" stroke-width="2.6" fill="none"/><path d="M125.2,18.3 L130.5,23.6 L135.8,18.3" stroke="#1a1a1e" stroke-width="2.6" fill="none"/><path d="M165.3,16.5 L174.6,25.8 M174.6,16.5 L165.3,25.8" stroke="#1a1a1e" stroke-width="2.8"/></svg><div class="a" style="left:68px;top:960px;width:1785px;height:30px;background:linear-gradient(#e4e5e7,#dcdde0);border-top:1px solid #c9cacd"></div><div class="a" style="left:170px;top:961px;width:1px;height:29px;background:#c6c7ca"></div><div class="a" style="left:466px;top:961px;width:1px;height:29px;background:#c6c7ca"></div><div class="a" style="left:655px;top:961px;width:1px;height:29px;background:#c6c7ca"></div><div class="a" style="left:667.5px;top:961px;width:1px;height:29px;background:#c6c7ca"></div><div class="st" style="left:80.5px;display:inline-block;transform:scaleX(0.93);transform-origin:0 0;"><b>BASES</b> 1104</div><div class="st" style="left:184px;display:inline-block;transform:scaleX(0.93);transform-origin:0 0;"><b>START</b> 1</div><div class="st" style="left:249.6px;display:inline-block;transform:scaleX(0.93);transform-origin:0 0;"><b>END</b> 3</div><div class="st" style="left:304.7px;display:inline-block;transform:scaleX(0.93);transform-origin:0 0;"><b>LENGTH</b> 3</div><div class="st" style="left:386.1px;display:inline-block;transform:scaleX(0.93);transform-origin:0 0;"><b>GC</b> 0.00%</div><div class="st" style="left:479px;display:inline-block;transform:scaleX(0.967);transform-origin:0 0;"><b>MELTING TEMP</b> -116.2 °C</div><div class="a" style="left:1567.5px;top:961px;width:117.3px;height:29px;background:linear-gradient(#e9eaec,#e1e2e5)"></div><div class="st" style="left:1581px;display:inline-block;transform:scaleX(0.96);transform-origin:0 0;"><b>ASSEMBLY</b></div><svg class="a" style="left:1660px;top:970px" width="14" height="12"><path d="M1.5,9.5 L6.5,3.5 L11.5,9.5 Z" fill="#222"/></svg><div class="a" style="left:1684.8px;top:961px;width:156.5px;height:29px;background:linear-gradient(#d8d9dc,#cfd0d3)"></div><div class="st" style="left:1697px;display:inline-block;transform:scaleX(0.97);transform-origin:0 0;"><b>SPLIT WORKSPACE</b></div><div class="a" style="left:1796px;top:902.5px;width:52.5px;height:52.5px;border-radius:50%;background:#3e63f5;box-shadow:0 2px 4px rgba(0,0,0,0.25)"></div><div class="a" style="left:1796px;top:915px;width:52.5px;text-align:center;font-size:21px;color:#fff">?</div></body></html>
